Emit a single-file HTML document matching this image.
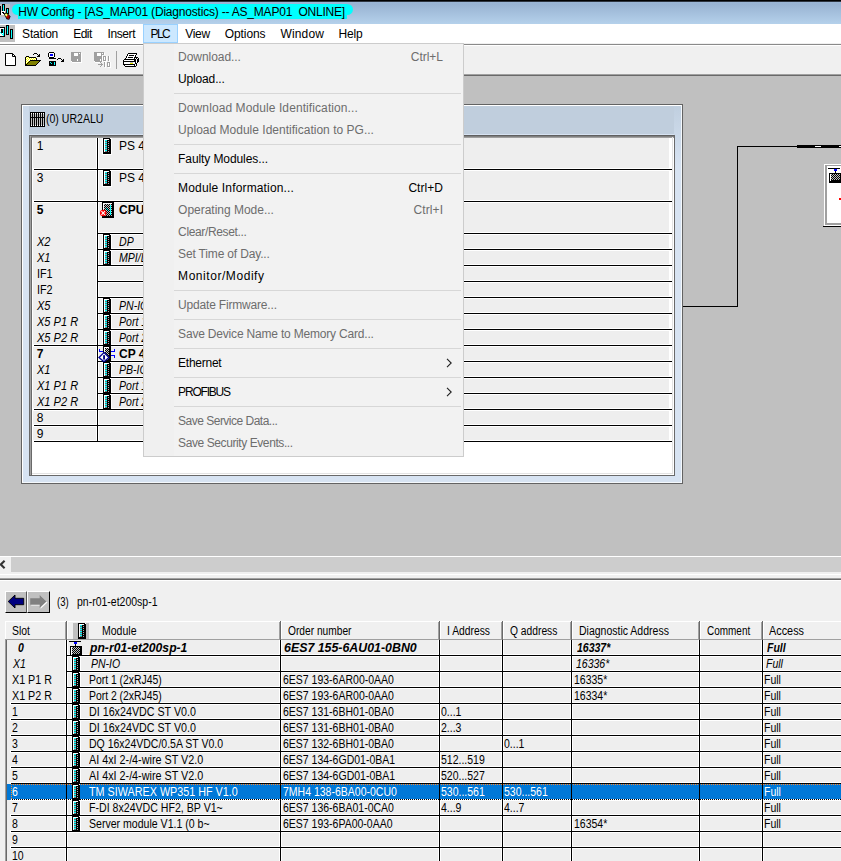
<!DOCTYPE html>
<html lang="en"><head><meta charset="utf-8"><title>HW Config</title>
<style>
html,body{margin:0;padding:0;background:#c0c0c0;overflow:hidden;}
#root{position:relative;width:841px;height:861px;overflow:hidden;background:#c0c0c0;font-family:"Liberation Sans", sans-serif;color:#000;}
#root div,#root span.t,#root svg{position:absolute;}
#root div{box-sizing:border-box;}
span.t{white-space:pre;}
svg{shape-rendering:crispEdges;overflow:visible;}
</style></head>
<body><div id="root">
<div style="left:0px;top:0px;width:841px;height:1px;background:#000;"></div>
<div style="left:0px;top:1px;width:841px;height:1px;background:#2e3540;"></div>
<div style="left:0px;top:2px;width:841px;height:22px;background:linear-gradient(#9bb6d6,#98b3d2 10%,#b5d1eb);"></div>
<div style="left:12px;top:4px;width:12px;height:11px;background:#00ffff;border-radius:50%;"></div>
<div style="left:341px;top:4px;width:12px;height:11px;background:#00ffff;border-radius:50%;"></div>
<div style="left:18px;top:4px;width:329px;height:15px;background:#00ffff;"></div>
<span class="t" style="left:18.2px;top:5px;font-size:12px;line-height:14px;letter-spacing:-0.202px;">HW Config - [AS_MAP01 (Diagnostics) -- AS_MAP01  ONLINE]</span>
<svg style="left:0px;top:4px" width="11" height="16" viewBox="0 0 11 16"><rect x="0" y="0" width="10" height="13" fill="#c0c0c0"/><rect x="0" y="2" width="1" height="9" fill="#000"/><rect x="2" y="0" width="3" height="9" fill="#000"/><rect x="3" y="1" width="1" height="7" fill="#00ffff"/><rect x="6" y="4" width="3" height="6" fill="#000"/><rect x="7" y="5" width="1" height="4" fill="#00ffff"/><rect x="1" y="7" width="4" height="4" fill="#fff"/><rect x="2" y="8" width="2" height="1" fill="#000"/><rect x="3" y="9" width="1" height="1" fill="#000"/><g shape-rendering="geometricPrecision"><path d="M3.6 9.6 L6.6 8.2 L10.6 12.4 L9.2 15.8 L6.6 15.2 Z" fill="#000"/><path d="M4.8 10 L6.4 9.4 L8 11 L6.2 13 Z" fill="#ffff00"/><path d="M8 11 L9.6 12.6 L8.8 14.8 L7 14.2 L6.2 13 Z" fill="#ff0000"/><path d="M5.2 10.6 L6.2 10.2 L7 11 L6 12 Z" fill="#fff"/><rect x="7.6" y="12.4" width="1" height="1.3" fill="#000"/></g></svg>
<div style="left:0px;top:24px;width:841px;height:20px;background:#fff;"></div>
<div style="left:0px;top:44px;width:841px;height:1px;background:#8a8a8a;"></div>
<div style="left:0px;top:45px;width:841px;height:1px;background:#fff;"></div>
<div style="left:464px;top:43px;width:377px;height:1px;background:#f0f0f0;"></div>
<div style="left:0px;top:25px;width:15px;height:17px;background:#c0c0c0;"></div>
<svg style="left:0px;top:25px" width="15" height="16" viewBox="0 0 15 16"><rect x="0" y="2" width="5" height="10" fill="#000"/><rect x="0" y="3" width="4" height="8" fill="#fff"/><rect x="1" y="4" width="2" height="4" fill="#000"/><rect x="3" y="4" width="1" height="7" fill="#00ffff"/><rect x="0" y="7" width="1" height="1" fill="#00ffff"/><rect x="1" y="8" width="1" height="1" fill="#00ffff"/><rect x="2" y="9" width="1" height="1" fill="#00ffff"/><rect x="6" y="0" width="3" height="10" fill="#000"/><rect x="7" y="1" width="1" height="8" fill="#00ffff"/><rect x="10" y="4" width="3" height="10" fill="#000"/><rect x="11" y="5" width="1" height="8" fill="#00ffff"/></svg>
<div style="left:143px;top:24px;width:35px;height:19px;background:#cce8ff;border:1px solid #99d1ff;"></div>
<span class="t" style="left:22.1px;top:27px;font-size:12px;line-height:14px;letter-spacing:-0.193px;">Station</span>
<span class="t" style="left:73.2px;top:27px;font-size:12px;line-height:14px;letter-spacing:-0.529px;">Edit</span>
<span class="t" style="left:107.5px;top:27px;font-size:12px;line-height:14px;letter-spacing:-0.403px;">Insert</span>
<span class="t" style="left:150.5px;top:27px;font-size:12px;line-height:14px;letter-spacing:-1.572px;">PLC</span>
<span class="t" style="left:185.2px;top:27px;font-size:12px;line-height:14px;letter-spacing:-0.266px;">View</span>
<span class="t" style="left:224.7px;top:27px;font-size:12px;line-height:14px;letter-spacing:-0.077px;">Options</span>
<span class="t" style="left:280.4px;top:27px;font-size:12px;line-height:14px;letter-spacing:0.163px;">Window</span>
<span class="t" style="left:338.6px;top:27px;font-size:12px;line-height:14px;letter-spacing:-0.229px;">Help</span>
<div style="left:0px;top:46px;width:841px;height:28px;background:#f0f0f0;"></div>
<div style="left:0px;top:74px;width:841px;height:1px;background:#a0a0a0;"></div>
<div style="left:0px;top:75px;width:841px;height:1px;background:#696969;"></div>
<svg style="left:5px;top:53px;shape-rendering:geometricPrecision" width="11" height="13" viewBox="0 0 11 13"><path d="M0.5 0.5 H7.5 L10.5 3.5 V12.5 H0.5 Z" fill="#fff" stroke="#000"/><path d="M7.5 0.5 V3.5 H10.5" fill="none" stroke="#000"/></svg><svg style="left:22px;top:50px" width="20" height="16" viewBox="0 0 20 16"><rect x="12" y="3" width="3" height="1" fill="#000"/><rect x="11" y="4" width="1" height="1" fill="#000"/><rect x="15" y="4" width="1" height="1" fill="#000"/><rect x="17" y="4" width="1" height="1" fill="#000"/><rect x="16" y="5" width="2" height="1" fill="#000"/><rect x="4" y="6" width="3" height="1" fill="#000"/><rect x="15" y="6" width="3" height="1" fill="#000"/><rect x="3" y="7" width="1" height="1" fill="#000"/><rect x="4" y="7" width="1" height="1" fill="#ffff00"/><rect x="5" y="7" width="1" height="1" fill="#fff"/><rect x="6" y="7" width="1" height="1" fill="#ffff00"/><rect x="7" y="7" width="7" height="1" fill="#000"/><rect x="3" y="8" width="1" height="1" fill="#000"/><rect x="4" y="8" width="1" height="1" fill="#fff"/><rect x="5" y="8" width="1" height="1" fill="#ffff00"/><rect x="6" y="8" width="1" height="1" fill="#fff"/><rect x="7" y="8" width="1" height="1" fill="#ffff00"/><rect x="8" y="8" width="1" height="1" fill="#fff"/><rect x="9" y="8" width="1" height="1" fill="#ffff00"/><rect x="10" y="8" width="1" height="1" fill="#fff"/><rect x="11" y="8" width="1" height="1" fill="#ffff00"/><rect x="12" y="8" width="1" height="1" fill="#fff"/><rect x="13" y="8" width="1" height="1" fill="#ffff00"/><rect x="14" y="8" width="1" height="1" fill="#000"/><rect x="3" y="9" width="1" height="1" fill="#000"/><rect x="4" y="9" width="1" height="1" fill="#ffff00"/><rect x="5" y="9" width="1" height="1" fill="#fff"/><rect x="6" y="9" width="1" height="1" fill="#ffff00"/><rect x="7" y="9" width="1" height="1" fill="#fff"/><rect x="8" y="9" width="1" height="1" fill="#ffff00"/><rect x="9" y="9" width="1" height="1" fill="#fff"/><rect x="10" y="9" width="1" height="1" fill="#ffff00"/><rect x="11" y="9" width="1" height="1" fill="#fff"/><rect x="12" y="9" width="1" height="1" fill="#ffff00"/><rect x="13" y="9" width="1" height="1" fill="#fff"/><rect x="14" y="9" width="1" height="1" fill="#000"/><rect x="3" y="10" width="1" height="1" fill="#000"/><rect x="4" y="10" width="1" height="1" fill="#fff"/><rect x="5" y="10" width="1" height="1" fill="#ffff00"/><rect x="6" y="10" width="1" height="1" fill="#fff"/><rect x="8" y="10" width="11" height="1" fill="#000"/><rect x="3" y="11" width="1" height="1" fill="#000"/><rect x="4" y="11" width="1" height="1" fill="#ffff00"/><rect x="5" y="11" width="1" height="1" fill="#fff"/><rect x="6" y="11" width="1" height="1" fill="#ffff00"/><rect x="7" y="11" width="1" height="1" fill="#000"/><rect x="8" y="11" width="9" height="1" fill="#808000"/><rect x="17" y="11" width="1" height="1" fill="#000"/><rect x="3" y="12" width="1" height="1" fill="#000"/><rect x="4" y="12" width="1" height="1" fill="#fff"/><rect x="5" y="12" width="1" height="1" fill="#ffff00"/><rect x="6" y="12" width="1" height="1" fill="#000"/><rect x="7" y="12" width="9" height="1" fill="#808000"/><rect x="16" y="12" width="1" height="1" fill="#000"/><rect x="3" y="13" width="1" height="1" fill="#000"/><rect x="4" y="13" width="1" height="1" fill="#ffff00"/><rect x="5" y="13" width="1" height="1" fill="#000"/><rect x="6" y="13" width="9" height="1" fill="#808000"/><rect x="15" y="13" width="1" height="1" fill="#000"/><rect x="3" y="14" width="2" height="1" fill="#000"/><rect x="5" y="14" width="9" height="1" fill="#808000"/><rect x="14" y="14" width="1" height="1" fill="#000"/><rect x="3" y="15" width="11" height="1" fill="#000"/></svg><svg style="left:45px;top:50px" width="20" height="16" viewBox="0 0 20 16"><rect x="4" y="2" width="5" height="1" fill="#000"/><rect x="3" y="3" width="1" height="1" fill="#000"/><rect x="4" y="3" width="5" height="1" fill="#fff"/><rect x="9" y="3" width="1" height="1" fill="#000"/><rect x="3" y="4" width="1" height="1" fill="#000"/><rect x="4" y="4" width="1" height="1" fill="#fff"/><rect x="5" y="4" width="3" height="1" fill="#0000ff"/><rect x="8" y="4" width="1" height="1" fill="#fff"/><rect x="9" y="4" width="1" height="1" fill="#000"/><rect x="3" y="5" width="1" height="1" fill="#000"/><rect x="4" y="5" width="1" height="1" fill="#fff"/><rect x="5" y="5" width="3" height="1" fill="#0000ff"/><rect x="8" y="5" width="1" height="1" fill="#fff"/><rect x="9" y="5" width="1" height="1" fill="#000"/><rect x="3" y="6" width="1" height="1" fill="#000"/><rect x="4" y="6" width="5" height="1" fill="#fff"/><rect x="9" y="6" width="1" height="1" fill="#000"/><rect x="4" y="7" width="5" height="1" fill="#000"/><rect x="4" y="8" width="7" height="1" fill="#000"/><rect x="13" y="8" width="3" height="1" fill="#000"/><rect x="12" y="9" width="1" height="1" fill="#000"/><rect x="16" y="9" width="1" height="1" fill="#000"/><rect x="18" y="9" width="1" height="1" fill="#000"/><rect x="17" y="10" width="2" height="1" fill="#000"/><rect x="4" y="11" width="7" height="1" fill="#000"/><rect x="16" y="11" width="3" height="1" fill="#000"/><rect x="4" y="12" width="1" height="1" fill="#000"/><rect x="5" y="12" width="1" height="1" fill="#00ffff"/><rect x="6" y="12" width="3" height="1" fill="#000"/><rect x="9" y="12" width="1" height="1" fill="#00ffff"/><rect x="10" y="12" width="1" height="1" fill="#000"/><rect x="4" y="13" width="2" height="1" fill="#000"/><rect x="6" y="13" width="1" height="1" fill="#00ffff"/><rect x="7" y="13" width="2" height="1" fill="#000"/><rect x="9" y="13" width="1" height="1" fill="#00ffff"/><rect x="10" y="13" width="1" height="1" fill="#000"/><rect x="4" y="14" width="5" height="1" fill="#000"/><rect x="9" y="14" width="1" height="1" fill="#00ffff"/><rect x="10" y="14" width="1" height="1" fill="#000"/><rect x="4" y="15" width="7" height="1" fill="#000"/></svg><svg style="left:68px;top:50px" width="14" height="13" viewBox="0 0 14 13"><rect x="3" y="2" width="10" height="1" fill="#a0a0a0"/><rect x="3" y="3" width="3" height="1" fill="#a0a0a0"/><rect x="6" y="3" width="4" height="1" fill="#fff"/><rect x="10" y="3" width="1" height="1" fill="#a0a0a0"/><rect x="11" y="3" width="1" height="1" fill="#fff"/><rect x="12" y="3" width="1" height="1" fill="#a0a0a0"/><rect x="13" y="3" width="1" height="1" fill="#fff"/><rect x="3" y="4" width="3" height="1" fill="#a0a0a0"/><rect x="6" y="4" width="4" height="1" fill="#fff"/><rect x="10" y="4" width="3" height="1" fill="#a0a0a0"/><rect x="13" y="4" width="1" height="1" fill="#fff"/><rect x="3" y="5" width="3" height="1" fill="#a0a0a0"/><rect x="6" y="5" width="4" height="1" fill="#fff"/><rect x="10" y="5" width="3" height="1" fill="#a0a0a0"/><rect x="13" y="5" width="1" height="1" fill="#fff"/><rect x="3" y="6" width="10" height="1" fill="#a0a0a0"/><rect x="13" y="6" width="1" height="1" fill="#fff"/><rect x="3" y="7" width="10" height="1" fill="#a0a0a0"/><rect x="13" y="7" width="1" height="1" fill="#fff"/><rect x="3" y="8" width="10" height="1" fill="#a0a0a0"/><rect x="13" y="8" width="1" height="1" fill="#fff"/><rect x="3" y="9" width="6" height="1" fill="#a0a0a0"/><rect x="9" y="9" width="1" height="1" fill="#fff"/><rect x="10" y="9" width="3" height="1" fill="#a0a0a0"/><rect x="13" y="9" width="1" height="1" fill="#fff"/><rect x="3" y="10" width="6" height="1" fill="#a0a0a0"/><rect x="9" y="10" width="1" height="1" fill="#fff"/><rect x="10" y="10" width="3" height="1" fill="#a0a0a0"/><rect x="13" y="10" width="1" height="1" fill="#fff"/><rect x="3" y="11" width="1" height="1" fill="#fff"/><rect x="4" y="11" width="9" height="1" fill="#a0a0a0"/><rect x="13" y="11" width="1" height="1" fill="#fff"/><rect x="4" y="12" width="10" height="1" fill="#fff"/></svg><svg style="left:91px;top:50px" width="20" height="18" viewBox="0 0 20 18"><rect x="3" y="2" width="10" height="1" fill="#a0a0a0"/><rect x="3" y="3" width="3" height="1" fill="#a0a0a0"/><rect x="6" y="3" width="4" height="1" fill="#fff"/><rect x="10" y="3" width="1" height="1" fill="#a0a0a0"/><rect x="11" y="3" width="1" height="1" fill="#fff"/><rect x="12" y="3" width="1" height="1" fill="#a0a0a0"/><rect x="13" y="3" width="1" height="1" fill="#fff"/><rect x="3" y="4" width="3" height="1" fill="#a0a0a0"/><rect x="6" y="4" width="4" height="1" fill="#fff"/><rect x="10" y="4" width="3" height="1" fill="#a0a0a0"/><rect x="13" y="4" width="1" height="1" fill="#fff"/><rect x="3" y="5" width="3" height="1" fill="#a0a0a0"/><rect x="6" y="5" width="4" height="1" fill="#fff"/><rect x="10" y="5" width="1" height="1" fill="#a0a0a0"/><rect x="11" y="5" width="1" height="1" fill="#fff"/><rect x="3" y="6" width="8" height="1" fill="#a0a0a0"/><rect x="11" y="6" width="1" height="1" fill="#fff"/><rect x="12" y="6" width="3" height="1" fill="#a0a0a0"/><rect x="15" y="6" width="1" height="1" fill="#fff"/><rect x="17" y="6" width="1" height="1" fill="#a0a0a0"/><rect x="18" y="6" width="1" height="1" fill="#fff"/><rect x="3" y="7" width="8" height="1" fill="#a0a0a0"/><rect x="11" y="7" width="1" height="1" fill="#fff"/><rect x="12" y="7" width="1" height="1" fill="#a0a0a0"/><rect x="13" y="7" width="1" height="1" fill="#fff"/><rect x="14" y="7" width="1" height="1" fill="#a0a0a0"/><rect x="15" y="7" width="1" height="1" fill="#fff"/><rect x="17" y="7" width="1" height="1" fill="#a0a0a0"/><rect x="18" y="7" width="1" height="1" fill="#fff"/><rect x="3" y="8" width="8" height="1" fill="#a0a0a0"/><rect x="11" y="8" width="1" height="1" fill="#fff"/><rect x="12" y="8" width="1" height="1" fill="#a0a0a0"/><rect x="13" y="8" width="1" height="1" fill="#fff"/><rect x="14" y="8" width="1" height="1" fill="#a0a0a0"/><rect x="15" y="8" width="1" height="1" fill="#fff"/><rect x="17" y="8" width="1" height="1" fill="#a0a0a0"/><rect x="18" y="8" width="1" height="1" fill="#fff"/><rect x="3" y="9" width="6" height="1" fill="#a0a0a0"/><rect x="9" y="9" width="1" height="1" fill="#fff"/><rect x="10" y="9" width="1" height="1" fill="#a0a0a0"/><rect x="11" y="9" width="1" height="1" fill="#fff"/><rect x="12" y="9" width="1" height="1" fill="#a0a0a0"/><rect x="13" y="9" width="1" height="1" fill="#fff"/><rect x="14" y="9" width="1" height="1" fill="#a0a0a0"/><rect x="15" y="9" width="1" height="1" fill="#fff"/><rect x="17" y="9" width="1" height="1" fill="#a0a0a0"/><rect x="18" y="9" width="1" height="1" fill="#fff"/><rect x="3" y="10" width="6" height="1" fill="#a0a0a0"/><rect x="9" y="10" width="1" height="1" fill="#fff"/><rect x="10" y="10" width="1" height="1" fill="#a0a0a0"/><rect x="11" y="10" width="1" height="1" fill="#fff"/><rect x="12" y="10" width="3" height="1" fill="#a0a0a0"/><rect x="15" y="10" width="1" height="1" fill="#fff"/><rect x="17" y="10" width="1" height="1" fill="#a0a0a0"/><rect x="18" y="10" width="1" height="1" fill="#fff"/><rect x="3" y="11" width="1" height="1" fill="#fff"/><rect x="4" y="11" width="7" height="1" fill="#a0a0a0"/><rect x="11" y="11" width="1" height="1" fill="#fff"/><rect x="13" y="11" width="3" height="1" fill="#fff"/><rect x="18" y="11" width="1" height="1" fill="#fff"/><rect x="4" y="12" width="5" height="1" fill="#fff"/><rect x="9" y="12" width="1" height="1" fill="#a0a0a0"/><rect x="13" y="12" width="1" height="1" fill="#a0a0a0"/><rect x="14" y="12" width="1" height="1" fill="#fff"/><rect x="16" y="12" width="3" height="1" fill="#a0a0a0"/><rect x="19" y="12" width="1" height="1" fill="#fff"/><rect x="10" y="13" width="1" height="1" fill="#a0a0a0"/><rect x="13" y="13" width="1" height="1" fill="#a0a0a0"/><rect x="14" y="13" width="1" height="1" fill="#fff"/><rect x="16" y="13" width="1" height="1" fill="#a0a0a0"/><rect x="17" y="13" width="1" height="1" fill="#fff"/><rect x="18" y="13" width="1" height="1" fill="#a0a0a0"/><rect x="19" y="13" width="1" height="1" fill="#fff"/><rect x="7" y="14" width="5" height="1" fill="#a0a0a0"/><rect x="13" y="14" width="1" height="1" fill="#a0a0a0"/><rect x="14" y="14" width="1" height="1" fill="#fff"/><rect x="16" y="14" width="1" height="1" fill="#a0a0a0"/><rect x="17" y="14" width="1" height="1" fill="#fff"/><rect x="18" y="14" width="1" height="1" fill="#a0a0a0"/><rect x="19" y="14" width="1" height="1" fill="#fff"/><rect x="10" y="15" width="1" height="1" fill="#a0a0a0"/><rect x="13" y="15" width="1" height="1" fill="#a0a0a0"/><rect x="14" y="15" width="1" height="1" fill="#fff"/><rect x="16" y="15" width="1" height="1" fill="#a0a0a0"/><rect x="17" y="15" width="1" height="1" fill="#fff"/><rect x="18" y="15" width="1" height="1" fill="#a0a0a0"/><rect x="19" y="15" width="1" height="1" fill="#fff"/><rect x="9" y="16" width="1" height="1" fill="#a0a0a0"/><rect x="13" y="16" width="1" height="1" fill="#a0a0a0"/><rect x="14" y="16" width="1" height="1" fill="#fff"/><rect x="16" y="16" width="3" height="1" fill="#a0a0a0"/><rect x="19" y="16" width="1" height="1" fill="#fff"/><rect x="14" y="17" width="1" height="1" fill="#fff"/><rect x="17" y="17" width="3" height="1" fill="#fff"/></svg><svg style="left:116px;top:51px" width="1" height="18" viewBox="0 0 1 18"><rect x="0" y="0" width="1" height="18" fill="#a0a0a0"/></svg><svg style="left:123px;top:53px" width="16" height="14" viewBox="0 0 16 14"><rect x="5" y="0" width="9" height="1" fill="#000"/><rect x="4" y="1" width="1" height="1" fill="#000"/><rect x="5" y="1" width="8" height="1" fill="#fff"/><rect x="13" y="1" width="1" height="1" fill="#000"/><rect x="4" y="2" width="1" height="1" fill="#000"/><rect x="5" y="2" width="1" height="1" fill="#fff"/><rect x="6" y="2" width="5" height="1" fill="#000"/><rect x="11" y="2" width="1" height="1" fill="#fff"/><rect x="12" y="2" width="1" height="1" fill="#000"/><rect x="3" y="3" width="1" height="1" fill="#000"/><rect x="4" y="3" width="8" height="1" fill="#fff"/><rect x="12" y="3" width="1" height="1" fill="#000"/><rect x="3" y="4" width="1" height="1" fill="#000"/><rect x="4" y="4" width="1" height="1" fill="#fff"/><rect x="5" y="4" width="5" height="1" fill="#000"/><rect x="10" y="4" width="1" height="1" fill="#fff"/><rect x="11" y="4" width="4" height="1" fill="#000"/><rect x="2" y="5" width="1" height="1" fill="#000"/><rect x="3" y="5" width="8" height="1" fill="#fff"/><rect x="11" y="5" width="1" height="1" fill="#000"/><rect x="12" y="5" width="1" height="1" fill="#fff"/><rect x="13" y="5" width="1" height="1" fill="#000"/><rect x="14" y="5" width="1" height="1" fill="#fff"/><rect x="15" y="5" width="1" height="1" fill="#000"/><rect x="1" y="6" width="12" height="1" fill="#000"/><rect x="13" y="6" width="1" height="1" fill="#fff"/><rect x="14" y="6" width="2" height="1" fill="#000"/><rect x="0" y="7" width="1" height="1" fill="#000"/><rect x="1" y="7" width="10" height="1" fill="#fff"/><rect x="11" y="7" width="2" height="1" fill="#000"/><rect x="13" y="7" width="1" height="1" fill="#fff"/><rect x="14" y="7" width="2" height="1" fill="#000"/><rect x="0" y="8" width="13" height="1" fill="#000"/><rect x="13" y="8" width="1" height="1" fill="#fff"/><rect x="14" y="8" width="2" height="1" fill="#000"/><rect x="0" y="9" width="1" height="1" fill="#000"/><rect x="1" y="9" width="6" height="1" fill="#fff"/><rect x="7" y="9" width="3" height="1" fill="#c0c0c0"/><rect x="10" y="9" width="2" height="1" fill="#fff"/><rect x="12" y="9" width="1" height="1" fill="#000"/><rect x="13" y="9" width="1" height="1" fill="#fff"/><rect x="14" y="9" width="1" height="1" fill="#000"/><rect x="0" y="10" width="1" height="1" fill="#000"/><rect x="1" y="10" width="6" height="1" fill="#fff"/><rect x="7" y="10" width="3" height="1" fill="#e8e800"/><rect x="10" y="10" width="2" height="1" fill="#fff"/><rect x="12" y="10" width="2" height="1" fill="#000"/><rect x="14" y="10" width="1" height="1" fill="#fff"/><rect x="0" y="11" width="12" height="1" fill="#000"/><rect x="12" y="11" width="1" height="1" fill="#fff"/><rect x="13" y="11" width="1" height="1" fill="#000"/><rect x="1" y="12" width="1" height="1" fill="#000"/><rect x="2" y="12" width="9" height="1" fill="#fff"/><rect x="11" y="12" width="1" height="1" fill="#000"/><rect x="12" y="12" width="1" height="1" fill="#fff"/><rect x="13" y="12" width="1" height="1" fill="#000"/><rect x="2" y="13" width="11" height="1" fill="#000"/></svg>
<div style="left:0px;top:76px;width:841px;height:480px;background:#c0c0c0;"></div>
<div style="left:683px;top:306px;width:55px;height:1px;background:#000;"></div>
<div style="left:737px;top:146px;width:1px;height:161px;background:#000;"></div>
<div style="left:737px;top:146px;width:104px;height:1px;background:#000;"></div>
<div style="left:797px;top:145px;width:44px;height:3px;background:#000;"></div>
<div style="left:815px;top:146px;width:6px;height:1px;background:#fff;"></div>
<div style="left:839px;top:146px;width:2px;height:1px;background:#fff;"></div>
<div style="left:824px;top:164px;width:20px;height:63px;background:#fff;"></div>
<div style="left:825px;top:165px;width:20px;height:60px;background:#a0a0a0;"></div>
<div style="left:827px;top:166px;width:20px;height:57px;background:#fff;"></div>
<div style="left:823px;top:226px;width:20px;height:1px;background:#000;"></div>
<svg style="left:828px;top:167px" width="13" height="17" viewBox="0 0 13 17"><rect x="0" y="1" width="12" height="1" fill="#000"/><rect x="6" y="2" width="3" height="2" fill="#0000ff"/><rect x="7" y="4" width="1" height="2" fill="#000"/><rect x="1" y="6" width="12" height="10" fill="#000"/><rect x="3" y="7" width="1" height="1" fill="#c0c0c0"/><rect x="5" y="7" width="1" height="1" fill="#c0c0c0"/><rect x="7" y="7" width="1" height="1" fill="#c0c0c0"/><rect x="9" y="7" width="1" height="1" fill="#c0c0c0"/><rect x="11" y="7" width="1" height="1" fill="#c0c0c0"/><rect x="4" y="8" width="1" height="1" fill="#c0c0c0"/><rect x="6" y="8" width="1" height="1" fill="#c0c0c0"/><rect x="8" y="8" width="1" height="1" fill="#c0c0c0"/><rect x="10" y="8" width="1" height="1" fill="#c0c0c0"/><rect x="3" y="9" width="1" height="1" fill="#c0c0c0"/><rect x="5" y="9" width="1" height="1" fill="#c0c0c0"/><rect x="7" y="9" width="1" height="1" fill="#c0c0c0"/><rect x="9" y="9" width="1" height="1" fill="#c0c0c0"/><rect x="11" y="9" width="1" height="1" fill="#c0c0c0"/><rect x="4" y="10" width="1" height="1" fill="#c0c0c0"/><rect x="6" y="10" width="1" height="1" fill="#c0c0c0"/><rect x="8" y="10" width="1" height="1" fill="#c0c0c0"/><rect x="10" y="10" width="1" height="1" fill="#c0c0c0"/><rect x="3" y="11" width="1" height="1" fill="#c0c0c0"/><rect x="5" y="11" width="1" height="1" fill="#c0c0c0"/><rect x="7" y="11" width="1" height="1" fill="#c0c0c0"/><rect x="9" y="11" width="1" height="1" fill="#c0c0c0"/><rect x="11" y="11" width="1" height="1" fill="#c0c0c0"/><rect x="4" y="12" width="1" height="1" fill="#c0c0c0"/><rect x="6" y="12" width="1" height="1" fill="#c0c0c0"/><rect x="8" y="12" width="1" height="1" fill="#c0c0c0"/><rect x="10" y="12" width="1" height="1" fill="#c0c0c0"/><rect x="2" y="7" width="1" height="7" fill="#fff"/></svg>
<div style="left:839px;top:198px;width:2px;height:2px;background:#ff0000;"></div>
<div style="left:21px;top:104px;width:662px;height:380px;background:#d7e3f2;border:1px solid #636363;"></div>
<div style="left:22px;top:105px;width:660px;height:378px;background:transparent;border:1px solid #fff;border-right-color:#f4f8fc;border-bottom-color:#f4f8fc;"></div>
<div style="left:29px;top:106px;width:645px;height:28px;background:#c0cedd;"></div>
<div style="left:674px;top:106px;width:7px;height:60px;background:linear-gradient(#c0cfdf,#d7e3f2);"></div>
<div style="left:23px;top:106px;width:6px;height:60px;background:linear-gradient(#cbd9e9,#d7e3f2);"></div>
<svg style="left:30px;top:112px" width="15" height="15" viewBox="0 0 15 15"><rect x="0" y="0" width="15" height="15" fill="#000"/><rect x="1" y="1" width="1" height="1" fill="#fff"/><rect x="1" y="2" width="1" height="3" fill="#c0c0c0"/><rect x="1" y="6" width="1" height="7" fill="#c0c0c0"/><rect x="1" y="13" width="1" height="1" fill="#fff"/><rect x="3" y="1" width="1" height="1" fill="#fff"/><rect x="3" y="2" width="1" height="3" fill="#c0c0c0"/><rect x="3" y="6" width="1" height="7" fill="#c0c0c0"/><rect x="3" y="13" width="1" height="1" fill="#fff"/><rect x="5" y="1" width="1" height="1" fill="#fff"/><rect x="5" y="2" width="1" height="3" fill="#c0c0c0"/><rect x="5" y="6" width="1" height="7" fill="#c0c0c0"/><rect x="5" y="13" width="1" height="1" fill="#fff"/><rect x="7" y="1" width="1" height="1" fill="#fff"/><rect x="7" y="2" width="1" height="3" fill="#c0c0c0"/><rect x="7" y="6" width="1" height="7" fill="#c0c0c0"/><rect x="7" y="13" width="1" height="1" fill="#fff"/><rect x="9" y="1" width="1" height="1" fill="#fff"/><rect x="9" y="2" width="1" height="3" fill="#c0c0c0"/><rect x="9" y="6" width="1" height="7" fill="#c0c0c0"/><rect x="9" y="13" width="1" height="1" fill="#fff"/><rect x="11" y="1" width="1" height="1" fill="#fff"/><rect x="11" y="2" width="1" height="3" fill="#c0c0c0"/><rect x="11" y="6" width="1" height="7" fill="#c0c0c0"/><rect x="11" y="13" width="1" height="1" fill="#fff"/><rect x="13" y="1" width="1" height="1" fill="#fff"/><rect x="13" y="2" width="1" height="3" fill="#c0c0c0"/><rect x="13" y="6" width="1" height="7" fill="#c0c0c0"/><rect x="13" y="13" width="1" height="1" fill="#fff"/></svg>
<span class="t" style="left:46px;top:112px;font-size:12px;line-height:14px;transform:scaleX(0.8782);transform-origin:0 0;">(0) UR2ALU</span>
<div style="left:29px;top:135px;width:646px;height:341px;background:#fff;"></div>
<div style="left:29px;top:135px;width:645px;height:1px;background:#606060;"></div>
<div style="left:29px;top:135px;width:1px;height:340px;background:#696969;"></div>
<div style="left:30px;top:136px;width:644px;height:1px;background:#808080;"></div>
<div style="left:30px;top:137px;width:644px;height:1px;background:#a0a0a0;"></div>
<div style="left:30px;top:136px;width:1px;height:339px;background:#a0a0a0;"></div>
<div style="left:31px;top:137px;width:1px;height:338px;background:#696969;"></div>
<div style="left:29px;top:475px;width:646px;height:1px;background:#696969;"></div>
<div style="left:674px;top:135px;width:1px;height:341px;background:#696969;"></div>
<div style="left:672px;top:137px;width:1px;height:337px;background:#e3e3e3;"></div>
<div style="left:32px;top:473px;width:641px;height:1px;background:#e3e3e3;"></div>
<div style="left:33px;top:138px;width:636px;height:304px;background:#eeeeee;"></div>
<div style="left:33px;top:168px;width:639px;height:3px;background:#fff;"></div>
<div style="left:33px;top:200px;width:639px;height:3px;background:#fff;"></div>
<div style="left:33px;top:344px;width:639px;height:3px;background:#fff;"></div>
<div style="left:33px;top:408px;width:639px;height:3px;background:#fff;"></div>
<div style="left:33px;top:424px;width:639px;height:3px;background:#fff;"></div>
<div style="left:33px;top:440px;width:639px;height:3px;background:#fff;"></div>
<div style="left:96px;top:232px;width:576px;height:3px;background:#fff;"></div>
<div style="left:96px;top:248px;width:576px;height:3px;background:#fff;"></div>
<div style="left:96px;top:264px;width:576px;height:3px;background:#fff;"></div>
<div style="left:96px;top:280px;width:576px;height:3px;background:#fff;"></div>
<div style="left:96px;top:296px;width:576px;height:3px;background:#fff;"></div>
<div style="left:96px;top:312px;width:576px;height:3px;background:#fff;"></div>
<div style="left:96px;top:328px;width:576px;height:3px;background:#fff;"></div>
<div style="left:96px;top:360px;width:576px;height:3px;background:#fff;"></div>
<div style="left:96px;top:376px;width:576px;height:3px;background:#fff;"></div>
<div style="left:96px;top:392px;width:576px;height:3px;background:#fff;"></div>
<div style="left:96px;top:138px;width:3px;height:304px;background:#fff;"></div>
<div style="left:102px;top:138px;width:10px;height:17px;background:#fff;"></div>
<div style="left:102px;top:170px;width:10px;height:17px;background:#fff;"></div>
<div style="left:102px;top:234px;width:10px;height:15px;background:#fff;"></div>
<div style="left:102px;top:250px;width:10px;height:15px;background:#fff;"></div>
<div style="left:102px;top:298px;width:10px;height:15px;background:#fff;"></div>
<div style="left:102px;top:314px;width:10px;height:15px;background:#fff;"></div>
<div style="left:102px;top:330px;width:10px;height:15px;background:#fff;"></div>
<div style="left:102px;top:362px;width:10px;height:15px;background:#fff;"></div>
<div style="left:102px;top:378px;width:10px;height:15px;background:#fff;"></div>
<div style="left:102px;top:394px;width:10px;height:15px;background:#fff;"></div>
<div style="left:34px;top:169px;width:638px;height:1px;background:#000;"></div>
<div style="left:34px;top:201px;width:638px;height:1px;background:#000;"></div>
<div style="left:34px;top:345px;width:638px;height:1px;background:#000;"></div>
<div style="left:34px;top:409px;width:638px;height:1px;background:#000;"></div>
<div style="left:34px;top:425px;width:638px;height:1px;background:#000;"></div>
<div style="left:34px;top:441px;width:638px;height:1px;background:#000;"></div>
<div style="left:97px;top:233px;width:575px;height:1px;background:#000;"></div>
<div style="left:97px;top:249px;width:575px;height:1px;background:#000;"></div>
<div style="left:97px;top:265px;width:575px;height:1px;background:#000;"></div>
<div style="left:97px;top:281px;width:575px;height:1px;background:#000;"></div>
<div style="left:97px;top:297px;width:575px;height:1px;background:#000;"></div>
<div style="left:97px;top:313px;width:575px;height:1px;background:#000;"></div>
<div style="left:97px;top:329px;width:575px;height:1px;background:#000;"></div>
<div style="left:97px;top:361px;width:575px;height:1px;background:#000;"></div>
<div style="left:97px;top:377px;width:575px;height:1px;background:#000;"></div>
<div style="left:97px;top:393px;width:575px;height:1px;background:#000;"></div>
<div style="left:97px;top:138px;width:1px;height:304px;background:#000;"></div>
<span class="t" style="left:36.7px;top:139px;font-size:12px;line-height:14px;">1</span>
<span class="t" style="left:36.7px;top:171px;font-size:12px;line-height:14px;">3</span>
<span class="t" style="left:36.7px;top:203px;font-size:12px;line-height:14px;font-weight:bold;">5</span>
<span class="t" style="left:36.7px;top:235px;font-size:12px;line-height:14px;font-style:italic;transform:scaleX(0.92);transform-origin:0 0;">X2</span>
<span class="t" style="left:36.7px;top:251px;font-size:12px;line-height:14px;font-style:italic;transform:scaleX(0.92);transform-origin:0 0;">X1</span>
<span class="t" style="left:36.7px;top:267px;font-size:12px;line-height:14px;transform:scaleX(0.9);transform-origin:0 0;">IF1</span>
<span class="t" style="left:36.7px;top:283px;font-size:12px;line-height:14px;transform:scaleX(0.9);transform-origin:0 0;">IF2</span>
<span class="t" style="left:36.7px;top:299px;font-size:12px;line-height:14px;font-style:italic;transform:scaleX(0.92);transform-origin:0 0;">X5</span>
<span class="t" style="left:36.7px;top:315px;font-size:12px;line-height:14px;font-style:italic;transform:scaleX(0.92);transform-origin:0 0;">X5 P1 R</span>
<span class="t" style="left:36.7px;top:331px;font-size:12px;line-height:14px;font-style:italic;transform:scaleX(0.92);transform-origin:0 0;">X5 P2 R</span>
<span class="t" style="left:36.7px;top:347px;font-size:12px;line-height:14px;font-weight:bold;">7</span>
<span class="t" style="left:36.7px;top:363px;font-size:12px;line-height:14px;font-style:italic;transform:scaleX(0.92);transform-origin:0 0;">X1</span>
<span class="t" style="left:36.7px;top:379px;font-size:12px;line-height:14px;font-style:italic;transform:scaleX(0.92);transform-origin:0 0;">X1 P1 R</span>
<span class="t" style="left:36.7px;top:395px;font-size:12px;line-height:14px;font-style:italic;transform:scaleX(0.92);transform-origin:0 0;">X1 P2 R</span>
<span class="t" style="left:36.7px;top:411px;font-size:12px;line-height:14px;">8</span>
<span class="t" style="left:36.7px;top:427px;font-size:12px;line-height:14px;">9</span>
<svg style="left:102px;top:138px" width="10" height="17" viewBox="-1 0 10 17"><rect x="0" y="0" width="8" height="16" fill="#000"/><rect x="1" y="1" width="1" height="13" fill="#fff"/><rect x="1" y="1" width="5" height="1" fill="#fff"/><rect x="7" y="0" width="1" height="1" fill="#fff"/><rect x="2" y="2" width="2" height="1" fill="#00ffff"/><rect x="2" y="3" width="2" height="1" fill="#707070"/><rect x="5" y="3" width="1" height="1" fill="#b0b0b0"/><rect x="2" y="4" width="2" height="1" fill="#00ffff"/><rect x="2" y="5" width="2" height="1" fill="#707070"/><rect x="5" y="5" width="1" height="1" fill="#b0b0b0"/><rect x="2" y="6" width="2" height="1" fill="#00ffff"/><rect x="2" y="7" width="2" height="1" fill="#707070"/><rect x="5" y="7" width="1" height="1" fill="#b0b0b0"/><rect x="2" y="8" width="2" height="1" fill="#00ffff"/><rect x="2" y="9" width="2" height="1" fill="#707070"/><rect x="5" y="9" width="1" height="1" fill="#b0b0b0"/><rect x="2" y="10" width="2" height="1" fill="#00ffff"/><rect x="2" y="11" width="2" height="1" fill="#707070"/><rect x="5" y="11" width="1" height="1" fill="#b0b0b0"/><rect x="2" y="12" width="2" height="1" fill="#00ffff"/><rect x="2" y="13" width="2" height="1" fill="#707070"/><rect x="5" y="13" width="1" height="1" fill="#b0b0b0"/></svg>
<span class="t" style="left:119px;top:139px;font-size:12px;line-height:14px;">PS 407 10A</span>
<svg style="left:102px;top:170px" width="10" height="17" viewBox="-1 0 10 17"><rect x="0" y="0" width="8" height="16" fill="#000"/><rect x="1" y="1" width="1" height="13" fill="#fff"/><rect x="1" y="1" width="5" height="1" fill="#fff"/><rect x="7" y="0" width="1" height="1" fill="#fff"/><rect x="2" y="2" width="2" height="1" fill="#00ffff"/><rect x="2" y="3" width="2" height="1" fill="#707070"/><rect x="5" y="3" width="1" height="1" fill="#b0b0b0"/><rect x="2" y="4" width="2" height="1" fill="#00ffff"/><rect x="2" y="5" width="2" height="1" fill="#707070"/><rect x="5" y="5" width="1" height="1" fill="#b0b0b0"/><rect x="2" y="6" width="2" height="1" fill="#00ffff"/><rect x="2" y="7" width="2" height="1" fill="#707070"/><rect x="5" y="7" width="1" height="1" fill="#b0b0b0"/><rect x="2" y="8" width="2" height="1" fill="#00ffff"/><rect x="2" y="9" width="2" height="1" fill="#707070"/><rect x="5" y="9" width="1" height="1" fill="#b0b0b0"/><rect x="2" y="10" width="2" height="1" fill="#00ffff"/><rect x="2" y="11" width="2" height="1" fill="#707070"/><rect x="5" y="11" width="1" height="1" fill="#b0b0b0"/><rect x="2" y="12" width="2" height="1" fill="#00ffff"/><rect x="2" y="13" width="2" height="1" fill="#707070"/><rect x="5" y="13" width="1" height="1" fill="#b0b0b0"/></svg>
<span class="t" style="left:119px;top:171px;font-size:12px;line-height:14px;">PS 407 10A</span>
<svg style="left:100px;top:202px" width="14" height="16" viewBox="0 0 14 16"><rect x="2" y="0" width="12" height="16" fill="#000"/><rect x="3" y="1" width="1" height="13" fill="#fff"/><rect x="3" y="1" width="9" height="1" fill="#fff"/><rect x="4" y="2" width="1" height="1" fill="#c0c0c0"/><rect x="6" y="2" width="1" height="1" fill="#c0c0c0"/><rect x="8" y="2" width="1" height="1" fill="#c0c0c0"/><rect x="10" y="2" width="1" height="1" fill="#c0c0c0"/><rect x="5" y="3" width="1" height="1" fill="#c0c0c0"/><rect x="7" y="3" width="1" height="1" fill="#c0c0c0"/><rect x="9" y="3" width="1" height="1" fill="#c0c0c0"/><rect x="11" y="3" width="1" height="1" fill="#c0c0c0"/><rect x="4" y="4" width="1" height="1" fill="#c0c0c0"/><rect x="6" y="4" width="1" height="1" fill="#c0c0c0"/><rect x="8" y="4" width="1" height="1" fill="#c0c0c0"/><rect x="10" y="4" width="1" height="1" fill="#c0c0c0"/><rect x="5" y="5" width="1" height="1" fill="#c0c0c0"/><rect x="7" y="5" width="1" height="1" fill="#c0c0c0"/><rect x="9" y="5" width="1" height="1" fill="#c0c0c0"/><rect x="11" y="5" width="1" height="1" fill="#c0c0c0"/><rect x="4" y="6" width="1" height="1" fill="#c0c0c0"/><rect x="6" y="6" width="1" height="1" fill="#c0c0c0"/><rect x="8" y="6" width="1" height="1" fill="#c0c0c0"/><rect x="10" y="6" width="1" height="1" fill="#c0c0c0"/><rect x="5" y="7" width="1" height="1" fill="#c0c0c0"/><rect x="7" y="7" width="1" height="1" fill="#c0c0c0"/><rect x="9" y="7" width="1" height="1" fill="#c0c0c0"/><rect x="11" y="7" width="1" height="1" fill="#c0c0c0"/><rect x="4" y="8" width="1" height="1" fill="#c0c0c0"/><rect x="6" y="8" width="1" height="1" fill="#c0c0c0"/><rect x="8" y="8" width="1" height="1" fill="#c0c0c0"/><rect x="10" y="8" width="1" height="1" fill="#c0c0c0"/><rect x="5" y="9" width="1" height="1" fill="#c0c0c0"/><rect x="7" y="9" width="1" height="1" fill="#c0c0c0"/><rect x="9" y="9" width="1" height="1" fill="#c0c0c0"/><rect x="11" y="9" width="1" height="1" fill="#c0c0c0"/><rect x="4" y="10" width="1" height="1" fill="#c0c0c0"/><rect x="6" y="10" width="1" height="1" fill="#c0c0c0"/><rect x="8" y="10" width="1" height="1" fill="#c0c0c0"/><rect x="10" y="10" width="1" height="1" fill="#c0c0c0"/><rect x="5" y="11" width="1" height="1" fill="#c0c0c0"/><rect x="7" y="11" width="1" height="1" fill="#c0c0c0"/><rect x="9" y="11" width="1" height="1" fill="#c0c0c0"/><rect x="11" y="11" width="1" height="1" fill="#c0c0c0"/><rect x="4" y="12" width="1" height="1" fill="#c0c0c0"/><rect x="6" y="12" width="1" height="1" fill="#c0c0c0"/><rect x="8" y="12" width="1" height="1" fill="#c0c0c0"/><rect x="10" y="12" width="1" height="1" fill="#c0c0c0"/><rect x="5" y="13" width="1" height="1" fill="#c0c0c0"/><rect x="7" y="13" width="1" height="1" fill="#c0c0c0"/><rect x="9" y="13" width="1" height="1" fill="#c0c0c0"/><rect x="11" y="13" width="1" height="1" fill="#c0c0c0"/><rect x="10" y="3" width="1" height="10" fill="#00ffff"/><rect x="6" y="6" width="1" height="1" fill="#00ffff"/><rect x="7" y="7" width="1" height="1" fill="#00ffff"/><rect x="8" y="8" width="1" height="1" fill="#00ffff"/><g shape-rendering="geometricPrecision"><circle cx="3.2" cy="11" r="3.3" fill="#ff0000"/><path d="M1.4 9.2 L5 12.8 M5 9.2 L1.4 12.8" stroke="#fff" stroke-width="1.1"/></g></svg>
<span class="t" style="left:119px;top:203px;font-size:12px;line-height:14px;font-weight:bold;">CPU 410-5H</span>
<svg style="left:102px;top:234px" width="10" height="17" viewBox="-1 0 10 17"><rect x="0" y="0" width="8" height="16" fill="#000"/><rect x="1" y="1" width="1" height="13" fill="#fff"/><rect x="1" y="1" width="5" height="1" fill="#fff"/><rect x="7" y="0" width="1" height="1" fill="#fff"/><rect x="2" y="2" width="2" height="1" fill="#00ffff"/><rect x="2" y="3" width="2" height="1" fill="#707070"/><rect x="5" y="3" width="1" height="1" fill="#b0b0b0"/><rect x="2" y="4" width="2" height="1" fill="#00ffff"/><rect x="2" y="5" width="2" height="1" fill="#707070"/><rect x="5" y="5" width="1" height="1" fill="#b0b0b0"/><rect x="2" y="6" width="2" height="1" fill="#00ffff"/><rect x="2" y="7" width="2" height="1" fill="#707070"/><rect x="5" y="7" width="1" height="1" fill="#b0b0b0"/><rect x="2" y="8" width="2" height="1" fill="#00ffff"/><rect x="2" y="9" width="2" height="1" fill="#707070"/><rect x="5" y="9" width="1" height="1" fill="#b0b0b0"/><rect x="2" y="10" width="2" height="1" fill="#00ffff"/><rect x="2" y="11" width="2" height="1" fill="#707070"/><rect x="5" y="11" width="1" height="1" fill="#b0b0b0"/><rect x="2" y="12" width="2" height="1" fill="#00ffff"/><rect x="2" y="13" width="2" height="1" fill="#707070"/><rect x="5" y="13" width="1" height="1" fill="#b0b0b0"/></svg>
<span class="t" style="left:119px;top:235px;font-size:12px;line-height:14px;font-style:italic;transform:scaleX(0.88);transform-origin:0 0;">DP</span>
<svg style="left:102px;top:250px" width="10" height="17" viewBox="-1 0 10 17"><rect x="0" y="0" width="8" height="16" fill="#000"/><rect x="1" y="1" width="1" height="13" fill="#fff"/><rect x="1" y="1" width="5" height="1" fill="#fff"/><rect x="7" y="0" width="1" height="1" fill="#fff"/><rect x="2" y="2" width="2" height="1" fill="#00ffff"/><rect x="2" y="3" width="2" height="1" fill="#707070"/><rect x="5" y="3" width="1" height="1" fill="#b0b0b0"/><rect x="2" y="4" width="2" height="1" fill="#00ffff"/><rect x="2" y="5" width="2" height="1" fill="#707070"/><rect x="5" y="5" width="1" height="1" fill="#b0b0b0"/><rect x="2" y="6" width="2" height="1" fill="#00ffff"/><rect x="2" y="7" width="2" height="1" fill="#707070"/><rect x="5" y="7" width="1" height="1" fill="#b0b0b0"/><rect x="2" y="8" width="2" height="1" fill="#00ffff"/><rect x="2" y="9" width="2" height="1" fill="#707070"/><rect x="5" y="9" width="1" height="1" fill="#b0b0b0"/><rect x="2" y="10" width="2" height="1" fill="#00ffff"/><rect x="2" y="11" width="2" height="1" fill="#707070"/><rect x="5" y="11" width="1" height="1" fill="#b0b0b0"/><rect x="2" y="12" width="2" height="1" fill="#00ffff"/><rect x="2" y="13" width="2" height="1" fill="#707070"/><rect x="5" y="13" width="1" height="1" fill="#b0b0b0"/></svg>
<span class="t" style="left:119px;top:251px;font-size:12px;line-height:14px;font-style:italic;transform:scaleX(0.88);transform-origin:0 0;">MPI/DP</span>
<svg style="left:102px;top:298px" width="10" height="17" viewBox="-1 0 10 17"><rect x="0" y="0" width="8" height="16" fill="#000"/><rect x="1" y="1" width="1" height="13" fill="#fff"/><rect x="1" y="1" width="5" height="1" fill="#fff"/><rect x="7" y="0" width="1" height="1" fill="#fff"/><rect x="2" y="2" width="2" height="1" fill="#00ffff"/><rect x="2" y="3" width="2" height="1" fill="#707070"/><rect x="5" y="3" width="1" height="1" fill="#b0b0b0"/><rect x="2" y="4" width="2" height="1" fill="#00ffff"/><rect x="2" y="5" width="2" height="1" fill="#707070"/><rect x="5" y="5" width="1" height="1" fill="#b0b0b0"/><rect x="2" y="6" width="2" height="1" fill="#00ffff"/><rect x="2" y="7" width="2" height="1" fill="#707070"/><rect x="5" y="7" width="1" height="1" fill="#b0b0b0"/><rect x="2" y="8" width="2" height="1" fill="#00ffff"/><rect x="2" y="9" width="2" height="1" fill="#707070"/><rect x="5" y="9" width="1" height="1" fill="#b0b0b0"/><rect x="2" y="10" width="2" height="1" fill="#00ffff"/><rect x="2" y="11" width="2" height="1" fill="#707070"/><rect x="5" y="11" width="1" height="1" fill="#b0b0b0"/><rect x="2" y="12" width="2" height="1" fill="#00ffff"/><rect x="2" y="13" width="2" height="1" fill="#707070"/><rect x="5" y="13" width="1" height="1" fill="#b0b0b0"/></svg>
<span class="t" style="left:119px;top:299px;font-size:12px;line-height:14px;font-style:italic;transform:scaleX(0.88);transform-origin:0 0;">PN-IO-X5</span>
<svg style="left:102px;top:314px" width="10" height="17" viewBox="-1 0 10 17"><rect x="0" y="0" width="8" height="16" fill="#000"/><rect x="1" y="1" width="1" height="13" fill="#fff"/><rect x="1" y="1" width="5" height="1" fill="#fff"/><rect x="7" y="0" width="1" height="1" fill="#fff"/><rect x="2" y="2" width="2" height="1" fill="#00ffff"/><rect x="2" y="3" width="2" height="1" fill="#707070"/><rect x="5" y="3" width="1" height="1" fill="#b0b0b0"/><rect x="2" y="4" width="2" height="1" fill="#00ffff"/><rect x="2" y="5" width="2" height="1" fill="#707070"/><rect x="5" y="5" width="1" height="1" fill="#b0b0b0"/><rect x="2" y="6" width="2" height="1" fill="#00ffff"/><rect x="2" y="7" width="2" height="1" fill="#707070"/><rect x="5" y="7" width="1" height="1" fill="#b0b0b0"/><rect x="2" y="8" width="2" height="1" fill="#00ffff"/><rect x="2" y="9" width="2" height="1" fill="#707070"/><rect x="5" y="9" width="1" height="1" fill="#b0b0b0"/><rect x="2" y="10" width="2" height="1" fill="#00ffff"/><rect x="2" y="11" width="2" height="1" fill="#707070"/><rect x="5" y="11" width="1" height="1" fill="#b0b0b0"/><rect x="2" y="12" width="2" height="1" fill="#00ffff"/><rect x="2" y="13" width="2" height="1" fill="#707070"/><rect x="5" y="13" width="1" height="1" fill="#b0b0b0"/></svg>
<span class="t" style="left:119px;top:315px;font-size:12px;line-height:14px;font-style:italic;transform:scaleX(0.88);transform-origin:0 0;">Port 1</span>
<svg style="left:102px;top:330px" width="10" height="17" viewBox="-1 0 10 17"><rect x="0" y="0" width="8" height="16" fill="#000"/><rect x="1" y="1" width="1" height="13" fill="#fff"/><rect x="1" y="1" width="5" height="1" fill="#fff"/><rect x="7" y="0" width="1" height="1" fill="#fff"/><rect x="2" y="2" width="2" height="1" fill="#00ffff"/><rect x="2" y="3" width="2" height="1" fill="#707070"/><rect x="5" y="3" width="1" height="1" fill="#b0b0b0"/><rect x="2" y="4" width="2" height="1" fill="#00ffff"/><rect x="2" y="5" width="2" height="1" fill="#707070"/><rect x="5" y="5" width="1" height="1" fill="#b0b0b0"/><rect x="2" y="6" width="2" height="1" fill="#00ffff"/><rect x="2" y="7" width="2" height="1" fill="#707070"/><rect x="5" y="7" width="1" height="1" fill="#b0b0b0"/><rect x="2" y="8" width="2" height="1" fill="#00ffff"/><rect x="2" y="9" width="2" height="1" fill="#707070"/><rect x="5" y="9" width="1" height="1" fill="#b0b0b0"/><rect x="2" y="10" width="2" height="1" fill="#00ffff"/><rect x="2" y="11" width="2" height="1" fill="#707070"/><rect x="5" y="11" width="1" height="1" fill="#b0b0b0"/><rect x="2" y="12" width="2" height="1" fill="#00ffff"/><rect x="2" y="13" width="2" height="1" fill="#707070"/><rect x="5" y="13" width="1" height="1" fill="#b0b0b0"/></svg>
<span class="t" style="left:119px;top:331px;font-size:12px;line-height:14px;font-style:italic;transform:scaleX(0.88);transform-origin:0 0;">Port 2</span>
<svg style="left:98px;top:346px" width="18" height="16" viewBox="0 0 18 16"><rect x="5" y="0" width="8" height="16" fill="#000"/><rect x="6" y="1" width="1" height="13" fill="#fff"/><rect x="6" y="1" width="5" height="1" fill="#fff"/><rect x="8" y="2" width="1" height="1" fill="#c0c0c0"/><rect x="10" y="2" width="1" height="1" fill="#c0c0c0"/><rect x="7" y="3" width="1" height="1" fill="#c0c0c0"/><rect x="9" y="3" width="1" height="1" fill="#c0c0c0"/><rect x="8" y="4" width="1" height="1" fill="#c0c0c0"/><rect x="10" y="4" width="1" height="1" fill="#c0c0c0"/><rect x="7" y="5" width="1" height="1" fill="#c0c0c0"/><rect x="9" y="5" width="1" height="1" fill="#c0c0c0"/><rect x="8" y="6" width="1" height="1" fill="#c0c0c0"/><rect x="10" y="6" width="1" height="1" fill="#c0c0c0"/><rect x="7" y="7" width="1" height="1" fill="#c0c0c0"/><rect x="9" y="7" width="1" height="1" fill="#c0c0c0"/><rect x="8" y="8" width="1" height="1" fill="#c0c0c0"/><rect x="10" y="8" width="1" height="1" fill="#c0c0c0"/><rect x="7" y="9" width="1" height="1" fill="#c0c0c0"/><rect x="9" y="9" width="1" height="1" fill="#c0c0c0"/><rect x="8" y="10" width="1" height="1" fill="#c0c0c0"/><rect x="10" y="10" width="1" height="1" fill="#c0c0c0"/><rect x="7" y="11" width="1" height="1" fill="#c0c0c0"/><rect x="9" y="11" width="1" height="1" fill="#c0c0c0"/><rect x="8" y="12" width="1" height="1" fill="#c0c0c0"/><rect x="10" y="12" width="1" height="1" fill="#c0c0c0"/><rect x="7" y="13" width="1" height="1" fill="#c0c0c0"/><rect x="9" y="13" width="1" height="1" fill="#c0c0c0"/><rect x="1" y="3" width="1" height="3" fill="#0000ff"/><rect x="1" y="5" width="4" height="1" fill="#0000ff"/><rect x="16" y="3" width="1" height="3" fill="#0000ff"/><rect x="13" y="5" width="4" height="1" fill="#0000ff"/><rect x="16" y="9" width="1" height="3" fill="#0000ff"/><rect x="13" y="9" width="4" height="1" fill="#0000ff"/><g shape-rendering="geometricPrecision"><path d="M6 6.6 L11 11.4 L6 15.8 L1 11.4 Z" fill="#fff" stroke="#000090" stroke-width="1.35"/><rect x="5.1" y="9.2" width="1.9" height="4.4" fill="#000080"/></g></svg>
<span class="t" style="left:119px;top:347px;font-size:12px;line-height:14px;font-weight:bold;">CP 443-1</span>
<svg style="left:102px;top:362px" width="10" height="17" viewBox="-1 0 10 17"><rect x="0" y="0" width="8" height="16" fill="#000"/><rect x="1" y="1" width="1" height="13" fill="#fff"/><rect x="1" y="1" width="5" height="1" fill="#fff"/><rect x="7" y="0" width="1" height="1" fill="#fff"/><rect x="2" y="2" width="2" height="1" fill="#00ffff"/><rect x="2" y="3" width="2" height="1" fill="#707070"/><rect x="5" y="3" width="1" height="1" fill="#b0b0b0"/><rect x="2" y="4" width="2" height="1" fill="#00ffff"/><rect x="2" y="5" width="2" height="1" fill="#707070"/><rect x="5" y="5" width="1" height="1" fill="#b0b0b0"/><rect x="2" y="6" width="2" height="1" fill="#00ffff"/><rect x="2" y="7" width="2" height="1" fill="#707070"/><rect x="5" y="7" width="1" height="1" fill="#b0b0b0"/><rect x="2" y="8" width="2" height="1" fill="#00ffff"/><rect x="2" y="9" width="2" height="1" fill="#707070"/><rect x="5" y="9" width="1" height="1" fill="#b0b0b0"/><rect x="2" y="10" width="2" height="1" fill="#00ffff"/><rect x="2" y="11" width="2" height="1" fill="#707070"/><rect x="5" y="11" width="1" height="1" fill="#b0b0b0"/><rect x="2" y="12" width="2" height="1" fill="#00ffff"/><rect x="2" y="13" width="2" height="1" fill="#707070"/><rect x="5" y="13" width="1" height="1" fill="#b0b0b0"/></svg>
<span class="t" style="left:119px;top:363px;font-size:12px;line-height:14px;font-style:italic;transform:scaleX(0.88);transform-origin:0 0;">PB-IO</span>
<svg style="left:102px;top:378px" width="10" height="17" viewBox="-1 0 10 17"><rect x="0" y="0" width="8" height="16" fill="#000"/><rect x="1" y="1" width="1" height="13" fill="#fff"/><rect x="1" y="1" width="5" height="1" fill="#fff"/><rect x="7" y="0" width="1" height="1" fill="#fff"/><rect x="2" y="2" width="2" height="1" fill="#00ffff"/><rect x="2" y="3" width="2" height="1" fill="#707070"/><rect x="5" y="3" width="1" height="1" fill="#b0b0b0"/><rect x="2" y="4" width="2" height="1" fill="#00ffff"/><rect x="2" y="5" width="2" height="1" fill="#707070"/><rect x="5" y="5" width="1" height="1" fill="#b0b0b0"/><rect x="2" y="6" width="2" height="1" fill="#00ffff"/><rect x="2" y="7" width="2" height="1" fill="#707070"/><rect x="5" y="7" width="1" height="1" fill="#b0b0b0"/><rect x="2" y="8" width="2" height="1" fill="#00ffff"/><rect x="2" y="9" width="2" height="1" fill="#707070"/><rect x="5" y="9" width="1" height="1" fill="#b0b0b0"/><rect x="2" y="10" width="2" height="1" fill="#00ffff"/><rect x="2" y="11" width="2" height="1" fill="#707070"/><rect x="5" y="11" width="1" height="1" fill="#b0b0b0"/><rect x="2" y="12" width="2" height="1" fill="#00ffff"/><rect x="2" y="13" width="2" height="1" fill="#707070"/><rect x="5" y="13" width="1" height="1" fill="#b0b0b0"/></svg>
<span class="t" style="left:119px;top:379px;font-size:12px;line-height:14px;font-style:italic;transform:scaleX(0.88);transform-origin:0 0;">Port 1</span>
<svg style="left:102px;top:394px" width="10" height="17" viewBox="-1 0 10 17"><rect x="0" y="0" width="8" height="16" fill="#000"/><rect x="1" y="1" width="1" height="13" fill="#fff"/><rect x="1" y="1" width="5" height="1" fill="#fff"/><rect x="7" y="0" width="1" height="1" fill="#fff"/><rect x="2" y="2" width="2" height="1" fill="#00ffff"/><rect x="2" y="3" width="2" height="1" fill="#707070"/><rect x="5" y="3" width="1" height="1" fill="#b0b0b0"/><rect x="2" y="4" width="2" height="1" fill="#00ffff"/><rect x="2" y="5" width="2" height="1" fill="#707070"/><rect x="5" y="5" width="1" height="1" fill="#b0b0b0"/><rect x="2" y="6" width="2" height="1" fill="#00ffff"/><rect x="2" y="7" width="2" height="1" fill="#707070"/><rect x="5" y="7" width="1" height="1" fill="#b0b0b0"/><rect x="2" y="8" width="2" height="1" fill="#00ffff"/><rect x="2" y="9" width="2" height="1" fill="#707070"/><rect x="5" y="9" width="1" height="1" fill="#b0b0b0"/><rect x="2" y="10" width="2" height="1" fill="#00ffff"/><rect x="2" y="11" width="2" height="1" fill="#707070"/><rect x="5" y="11" width="1" height="1" fill="#b0b0b0"/><rect x="2" y="12" width="2" height="1" fill="#00ffff"/><rect x="2" y="13" width="2" height="1" fill="#707070"/><rect x="5" y="13" width="1" height="1" fill="#b0b0b0"/></svg>
<span class="t" style="left:119px;top:395px;font-size:12px;line-height:14px;font-style:italic;transform:scaleX(0.88);transform-origin:0 0;">Port 2</span>
<div style="left:0px;top:556px;width:841px;height:1px;background:#fff;"></div>
<div style="left:0px;top:557px;width:841px;height:17px;background:#f0f0f0;"></div>
<div style="left:11px;top:557px;width:830px;height:15px;background:#cdcdcd;"></div>
<svg style="left:0;top:560px;shape-rendering:geometricPrecision" width="8" height="9" viewBox="0 0 8 9"><path d="M4.6 0.8 L0.8 4.5 L4.6 8.2" fill="none" stroke="#333" stroke-width="2.1"/></svg>
<div style="left:0px;top:574px;width:841px;height:1px;background:#fff;"></div>
<div style="left:0px;top:575px;width:841px;height:3px;background:#f0f0f0;"></div>
<div style="left:0px;top:578px;width:841px;height:1px;background:#a0a0a0;"></div>
<div style="left:0px;top:579px;width:841px;height:1px;background:#696969;"></div>
<div style="left:0px;top:580px;width:841px;height:1px;background:#fff;"></div>
<div style="left:0px;top:581px;width:841px;height:280px;background:#f0f0f0;"></div>
<div style="left:5px;top:591px;width:22px;height:22px;background:#c0c0c0;border-top:1px solid #fff;border-left:1px solid #fff;border-right:1px solid #585858;border-bottom:1px solid #000;"></div>
<div style="left:27px;top:591px;width:23px;height:22px;background:#c0c0c0;border-top:1px solid #fff;border-left:1px solid #fff;border-right:1px solid #000;border-bottom:1px solid #000;"></div>
<svg style="left:5px;top:591px;shape-rendering:geometricPrecision" width="46" height="22" viewBox="0 0 46 22"><path d="M3.2 10.5 L10 4 L10 7.3 L18.7 7.3 L18.7 13.7 L10 13.7 L10 17 Z" fill="#000080" stroke="#000" stroke-width="0.9"/><path d="M42.4 11.4 L35.6 5 L35.6 8.2 L26.2 8.2 L26.2 14.6 L35.6 14.6 L35.6 17.8 Z" fill="#fff"/><path d="M41.5 10.5 L34.7 4.1 L34.7 7.2 L25.2 7.2 L25.2 13.7 L34.7 13.7 L34.7 17 Z" fill="#808080"/></svg>
<span class="t" style="left:56.5px;top:595px;font-size:12px;line-height:14px;transform:scaleX(0.7974);transform-origin:0 0;">(3)</span>
<span class="t" style="left:77.3px;top:595px;font-size:12px;line-height:14px;transform:scaleX(0.8744);transform-origin:0 0;">pn-r01-et200sp-1</span>
<div style="left:5px;top:621px;width:836px;height:19px;background:#f0f0f0;"></div>
<div style="left:5px;top:621px;width:836px;height:1px;background:#fff;"></div>
<div style="left:5px;top:639px;width:836px;height:1px;background:#a0a0a0;"></div>
<div style="left:5px;top:621px;width:1px;height:18px;background:#fff;"></div>
<div style="left:65px;top:622px;width:1px;height:18px;background:#a0a0a0;"></div>
<div style="left:66px;top:621px;width:1px;height:19px;background:#696969;"></div>
<div style="left:67px;top:621px;width:1px;height:18px;background:#fff;"></div>
<div style="left:279px;top:622px;width:1px;height:18px;background:#a0a0a0;"></div>
<div style="left:280px;top:621px;width:1px;height:19px;background:#696969;"></div>
<div style="left:281px;top:621px;width:1px;height:18px;background:#fff;"></div>
<div style="left:438px;top:622px;width:1px;height:18px;background:#a0a0a0;"></div>
<div style="left:439px;top:621px;width:1px;height:19px;background:#696969;"></div>
<div style="left:440px;top:621px;width:1px;height:18px;background:#fff;"></div>
<div style="left:501px;top:622px;width:1px;height:18px;background:#a0a0a0;"></div>
<div style="left:502px;top:621px;width:1px;height:19px;background:#696969;"></div>
<div style="left:503px;top:621px;width:1px;height:18px;background:#fff;"></div>
<div style="left:570px;top:622px;width:1px;height:18px;background:#a0a0a0;"></div>
<div style="left:571px;top:621px;width:1px;height:19px;background:#696969;"></div>
<div style="left:572px;top:621px;width:1px;height:18px;background:#fff;"></div>
<div style="left:698px;top:622px;width:1px;height:18px;background:#a0a0a0;"></div>
<div style="left:699px;top:621px;width:1px;height:19px;background:#696969;"></div>
<div style="left:700px;top:621px;width:1px;height:18px;background:#fff;"></div>
<div style="left:761px;top:622px;width:1px;height:18px;background:#a0a0a0;"></div>
<div style="left:762px;top:621px;width:1px;height:19px;background:#696969;"></div>
<div style="left:763px;top:621px;width:1px;height:18px;background:#fff;"></div>
<div style="left:73px;top:623px;width:16px;height:16px;background:#c0c0c0;"></div>
<svg style="left:77px;top:623px" width="10" height="17" viewBox="-1 0 10 17"><rect x="0" y="0" width="8" height="16" fill="#000"/><rect x="1" y="1" width="1" height="13" fill="#fff"/><rect x="1" y="1" width="5" height="1" fill="#fff"/><rect x="7" y="0" width="1" height="1" fill="#fff"/><rect x="2" y="2" width="2" height="1" fill="#00ffff"/><rect x="2" y="3" width="2" height="1" fill="#707070"/><rect x="5" y="3" width="1" height="1" fill="#b0b0b0"/><rect x="2" y="4" width="2" height="1" fill="#00ffff"/><rect x="2" y="5" width="2" height="1" fill="#707070"/><rect x="5" y="5" width="1" height="1" fill="#b0b0b0"/><rect x="2" y="6" width="2" height="1" fill="#00ffff"/><rect x="2" y="7" width="2" height="1" fill="#707070"/><rect x="5" y="7" width="1" height="1" fill="#b0b0b0"/><rect x="2" y="8" width="2" height="1" fill="#00ffff"/><rect x="2" y="9" width="2" height="1" fill="#707070"/><rect x="5" y="9" width="1" height="1" fill="#b0b0b0"/><rect x="2" y="10" width="2" height="1" fill="#00ffff"/><rect x="2" y="11" width="2" height="1" fill="#707070"/><rect x="5" y="11" width="1" height="1" fill="#b0b0b0"/><rect x="2" y="12" width="2" height="1" fill="#00ffff"/><rect x="2" y="13" width="2" height="1" fill="#707070"/><rect x="5" y="13" width="1" height="1" fill="#b0b0b0"/></svg>
<span class="t" style="left:11.7px;top:624px;font-size:12px;line-height:14px;transform:scaleX(0.8701);transform-origin:0 0;">Slot</span>
<span class="t" style="left:101.6px;top:624px;font-size:12px;line-height:14px;transform:scaleX(0.8765);transform-origin:0 0;">Module</span>
<span class="t" style="left:287.8px;top:624px;font-size:12px;line-height:14px;transform:scaleX(0.8500);transform-origin:0 0;">Order number</span>
<span class="t" style="left:447px;top:624px;font-size:12px;line-height:14px;transform:scaleX(0.8595);transform-origin:0 0;">I Address</span>
<span class="t" style="left:509.7px;top:624px;font-size:12px;line-height:14px;transform:scaleX(0.8562);transform-origin:0 0;">Q address</span>
<span class="t" style="left:578.8px;top:624px;font-size:12px;line-height:14px;transform:scaleX(0.8751);transform-origin:0 0;">Diagnostic Address</span>
<span class="t" style="left:706.9px;top:624px;font-size:12px;line-height:14px;transform:scaleX(0.8305);transform-origin:0 0;">Comment</span>
<span class="t" style="left:769.3px;top:624px;font-size:12px;line-height:14px;transform:scaleX(0.9047);transform-origin:0 0;">Access</span>
<div style="left:5px;top:640px;width:836px;height:221px;background:#eeeeee;"></div>
<div style="left:5px;top:640px;width:1px;height:221px;background:#a0a0a0;"></div>
<div style="left:6px;top:640px;width:1px;height:221px;background:#696969;"></div>
<div style="left:65px;top:654px;width:776px;height:3px;background:#fff"></div><div style="left:65px;top:670px;width:776px;height:3px;background:#fff"></div><div style="left:71px;top:656px;width:10px;height:16px;background:#fff"></div><div style="left:65px;top:686px;width:776px;height:3px;background:#fff"></div><div style="left:71px;top:672px;width:10px;height:16px;background:#fff"></div><div style="left:10px;top:702px;width:831px;height:3px;background:#fff"></div><div style="left:71px;top:688px;width:10px;height:16px;background:#fff"></div><div style="left:10px;top:718px;width:831px;height:3px;background:#fff"></div><div style="left:71px;top:704px;width:10px;height:16px;background:#fff"></div><div style="left:10px;top:734px;width:831px;height:3px;background:#fff"></div><div style="left:71px;top:720px;width:10px;height:16px;background:#fff"></div><div style="left:10px;top:750px;width:831px;height:3px;background:#fff"></div><div style="left:71px;top:736px;width:10px;height:16px;background:#fff"></div><div style="left:10px;top:766px;width:831px;height:3px;background:#fff"></div><div style="left:71px;top:752px;width:10px;height:16px;background:#fff"></div><div style="left:10px;top:782px;width:831px;height:3px;background:#fff"></div><div style="left:71px;top:768px;width:10px;height:16px;background:#fff"></div><div style="left:10px;top:798px;width:831px;height:3px;background:#fff"></div><div style="left:71px;top:784px;width:10px;height:16px;background:#fff"></div><div style="left:10px;top:814px;width:831px;height:3px;background:#fff"></div><div style="left:71px;top:800px;width:10px;height:16px;background:#fff"></div><div style="left:10px;top:830px;width:831px;height:3px;background:#fff"></div><div style="left:71px;top:816px;width:10px;height:16px;background:#fff"></div><div style="left:10px;top:846px;width:831px;height:3px;background:#fff"></div><div style="left:10px;top:862px;width:831px;height:3px;background:#fff"></div><div style="left:65px;top:640px;width:3px;height:221px;background:#fff"></div><div style="left:279px;top:640px;width:3px;height:221px;background:#fff"></div><div style="left:438px;top:640px;width:3px;height:221px;background:#fff"></div><div style="left:501px;top:640px;width:3px;height:221px;background:#fff"></div><div style="left:570px;top:640px;width:3px;height:221px;background:#fff"></div><div style="left:698px;top:640px;width:3px;height:221px;background:#fff"></div><div style="left:761px;top:640px;width:3px;height:221px;background:#fff"></div>
<div style="left:66px;top:655px;width:775px;height:1px;background:#000;"></div>
<span class="t" style="left:17.8px;top:641px;font-size:12px;line-height:14px;font-weight:bold;font-style:italic;transform:scaleX(0.875);transform-origin:0 0;">0</span>
<svg style="left:69px;top:640px" width="14" height="16" viewBox="0 0 14 16"><rect x="0" y="1" width="12" height="1" fill="#000"/><rect x="5" y="2" width="3" height="2" fill="#0000ff"/><rect x="6" y="4" width="1" height="2" fill="#000"/><rect x="1" y="6" width="12" height="10" fill="#000"/><rect x="3" y="7" width="1" height="1" fill="#c0c0c0"/><rect x="5" y="7" width="1" height="1" fill="#c0c0c0"/><rect x="7" y="7" width="1" height="1" fill="#c0c0c0"/><rect x="9" y="7" width="1" height="1" fill="#c0c0c0"/><rect x="4" y="8" width="1" height="1" fill="#c0c0c0"/><rect x="6" y="8" width="1" height="1" fill="#c0c0c0"/><rect x="8" y="8" width="1" height="1" fill="#c0c0c0"/><rect x="10" y="8" width="1" height="1" fill="#c0c0c0"/><rect x="3" y="9" width="1" height="1" fill="#c0c0c0"/><rect x="5" y="9" width="1" height="1" fill="#c0c0c0"/><rect x="7" y="9" width="1" height="1" fill="#c0c0c0"/><rect x="9" y="9" width="1" height="1" fill="#c0c0c0"/><rect x="4" y="10" width="1" height="1" fill="#c0c0c0"/><rect x="6" y="10" width="1" height="1" fill="#c0c0c0"/><rect x="8" y="10" width="1" height="1" fill="#c0c0c0"/><rect x="10" y="10" width="1" height="1" fill="#c0c0c0"/><rect x="3" y="11" width="1" height="1" fill="#c0c0c0"/><rect x="5" y="11" width="1" height="1" fill="#c0c0c0"/><rect x="7" y="11" width="1" height="1" fill="#c0c0c0"/><rect x="9" y="11" width="1" height="1" fill="#c0c0c0"/><rect x="4" y="12" width="1" height="1" fill="#c0c0c0"/><rect x="6" y="12" width="1" height="1" fill="#c0c0c0"/><rect x="8" y="12" width="1" height="1" fill="#c0c0c0"/><rect x="10" y="12" width="1" height="1" fill="#c0c0c0"/><rect x="3" y="13" width="1" height="1" fill="#c0c0c0"/><rect x="5" y="13" width="1" height="1" fill="#c0c0c0"/><rect x="7" y="13" width="1" height="1" fill="#c0c0c0"/><rect x="9" y="13" width="1" height="1" fill="#c0c0c0"/><rect x="2" y="7" width="1" height="8" fill="#fff"/></svg>
<span class="t" style="left:89.9px;top:641px;font-size:12px;line-height:14px;font-weight:bold;font-style:italic;transform:scaleX(1.0141);transform-origin:0 0;">pn-r01-et200sp-1</span>
<span class="t" style="left:284.3px;top:641px;font-size:12px;line-height:14px;font-weight:bold;font-style:italic;transform:scaleX(1.0307);transform-origin:0 0;">6ES7 155-6AU01-0BN0</span>
<span class="t" style="left:576.7px;top:641px;font-size:12px;line-height:14px;font-weight:bold;font-style:italic;transform:scaleX(0.875);transform-origin:0 0;">16337*</span>
<span class="t" style="left:766.5px;top:641px;font-size:12px;line-height:14px;font-weight:bold;font-style:italic;transform:scaleX(0.875);transform-origin:0 0;">Full</span>
<div style="left:66px;top:671px;width:775px;height:1px;background:#000;"></div>
<span class="t" style="left:12.5px;top:657px;font-size:12px;line-height:14px;font-style:italic;transform:scaleX(0.875);transform-origin:0 0;">X1</span>
<svg style="left:71px;top:656px" width="10" height="17" viewBox="-1 0 10 17"><rect x="0" y="0" width="8" height="16" fill="#000"/><rect x="1" y="1" width="1" height="13" fill="#fff"/><rect x="1" y="1" width="5" height="1" fill="#fff"/><rect x="7" y="0" width="1" height="1" fill="#fff"/><rect x="2" y="2" width="2" height="1" fill="#00ffff"/><rect x="2" y="3" width="2" height="1" fill="#707070"/><rect x="5" y="3" width="1" height="1" fill="#b0b0b0"/><rect x="2" y="4" width="2" height="1" fill="#00ffff"/><rect x="2" y="5" width="2" height="1" fill="#707070"/><rect x="5" y="5" width="1" height="1" fill="#b0b0b0"/><rect x="2" y="6" width="2" height="1" fill="#00ffff"/><rect x="2" y="7" width="2" height="1" fill="#707070"/><rect x="5" y="7" width="1" height="1" fill="#b0b0b0"/><rect x="2" y="8" width="2" height="1" fill="#00ffff"/><rect x="2" y="9" width="2" height="1" fill="#707070"/><rect x="5" y="9" width="1" height="1" fill="#b0b0b0"/><rect x="2" y="10" width="2" height="1" fill="#00ffff"/><rect x="2" y="11" width="2" height="1" fill="#707070"/><rect x="5" y="11" width="1" height="1" fill="#b0b0b0"/><rect x="2" y="12" width="2" height="1" fill="#00ffff"/><rect x="2" y="13" width="2" height="1" fill="#707070"/><rect x="5" y="13" width="1" height="1" fill="#b0b0b0"/></svg>
<span class="t" style="left:91px;top:657px;font-size:12px;line-height:14px;font-style:italic;transform:scaleX(0.875);transform-origin:0 0;">PN-IO</span>
<span class="t" style="left:576px;top:657px;font-size:12px;line-height:14px;font-style:italic;transform:scaleX(0.875);transform-origin:0 0;">16336*</span>
<span class="t" style="left:766px;top:657px;font-size:12px;line-height:14px;font-style:italic;transform:scaleX(0.875);transform-origin:0 0;">Full</span>
<div style="left:66px;top:687px;width:775px;height:1px;background:#000;"></div>
<span class="t" style="left:11.8px;top:673px;font-size:12px;line-height:14px;transform:scaleX(0.8948);transform-origin:0 0;">X1 P1 R</span>
<svg style="left:71px;top:672px" width="10" height="17" viewBox="-1 0 10 17"><rect x="0" y="0" width="8" height="16" fill="#000"/><rect x="1" y="1" width="1" height="13" fill="#fff"/><rect x="1" y="1" width="5" height="1" fill="#fff"/><rect x="7" y="0" width="1" height="1" fill="#fff"/><rect x="2" y="2" width="2" height="1" fill="#00ffff"/><rect x="2" y="3" width="2" height="1" fill="#707070"/><rect x="5" y="3" width="1" height="1" fill="#b0b0b0"/><rect x="2" y="4" width="2" height="1" fill="#00ffff"/><rect x="2" y="5" width="2" height="1" fill="#707070"/><rect x="5" y="5" width="1" height="1" fill="#b0b0b0"/><rect x="2" y="6" width="2" height="1" fill="#00ffff"/><rect x="2" y="7" width="2" height="1" fill="#707070"/><rect x="5" y="7" width="1" height="1" fill="#b0b0b0"/><rect x="2" y="8" width="2" height="1" fill="#00ffff"/><rect x="2" y="9" width="2" height="1" fill="#707070"/><rect x="5" y="9" width="1" height="1" fill="#b0b0b0"/><rect x="2" y="10" width="2" height="1" fill="#00ffff"/><rect x="2" y="11" width="2" height="1" fill="#707070"/><rect x="5" y="11" width="1" height="1" fill="#b0b0b0"/><rect x="2" y="12" width="2" height="1" fill="#00ffff"/><rect x="2" y="13" width="2" height="1" fill="#707070"/><rect x="5" y="13" width="1" height="1" fill="#b0b0b0"/></svg>
<span class="t" style="left:88.5px;top:673px;font-size:12px;line-height:14px;transform:scaleX(0.8663);transform-origin:0 0;">Port 1 (2xRJ45)</span>
<span class="t" style="left:283px;top:673px;font-size:12px;line-height:14px;transform:scaleX(0.875);transform-origin:0 0;">6ES7 193-6AR00-0AA0</span>
<span class="t" style="left:574px;top:673px;font-size:12px;line-height:14px;transform:scaleX(0.875);transform-origin:0 0;">16335*</span>
<span class="t" style="left:764px;top:673px;font-size:12px;line-height:14px;transform:scaleX(0.875);transform-origin:0 0;">Full</span>
<div style="left:11px;top:703px;width:830px;height:1px;background:#000;"></div>
<span class="t" style="left:11.8px;top:689px;font-size:12px;line-height:14px;transform:scaleX(0.8948);transform-origin:0 0;">X1 P2 R</span>
<svg style="left:71px;top:688px" width="10" height="17" viewBox="-1 0 10 17"><rect x="0" y="0" width="8" height="16" fill="#000"/><rect x="1" y="1" width="1" height="13" fill="#fff"/><rect x="1" y="1" width="5" height="1" fill="#fff"/><rect x="7" y="0" width="1" height="1" fill="#fff"/><rect x="2" y="2" width="2" height="1" fill="#00ffff"/><rect x="2" y="3" width="2" height="1" fill="#707070"/><rect x="5" y="3" width="1" height="1" fill="#b0b0b0"/><rect x="2" y="4" width="2" height="1" fill="#00ffff"/><rect x="2" y="5" width="2" height="1" fill="#707070"/><rect x="5" y="5" width="1" height="1" fill="#b0b0b0"/><rect x="2" y="6" width="2" height="1" fill="#00ffff"/><rect x="2" y="7" width="2" height="1" fill="#707070"/><rect x="5" y="7" width="1" height="1" fill="#b0b0b0"/><rect x="2" y="8" width="2" height="1" fill="#00ffff"/><rect x="2" y="9" width="2" height="1" fill="#707070"/><rect x="5" y="9" width="1" height="1" fill="#b0b0b0"/><rect x="2" y="10" width="2" height="1" fill="#00ffff"/><rect x="2" y="11" width="2" height="1" fill="#707070"/><rect x="5" y="11" width="1" height="1" fill="#b0b0b0"/><rect x="2" y="12" width="2" height="1" fill="#00ffff"/><rect x="2" y="13" width="2" height="1" fill="#707070"/><rect x="5" y="13" width="1" height="1" fill="#b0b0b0"/></svg>
<span class="t" style="left:88.5px;top:689px;font-size:12px;line-height:14px;transform:scaleX(0.8663);transform-origin:0 0;">Port 2 (2xRJ45)</span>
<span class="t" style="left:283px;top:689px;font-size:12px;line-height:14px;transform:scaleX(0.875);transform-origin:0 0;">6ES7 193-6AR00-0AA0</span>
<span class="t" style="left:574px;top:689px;font-size:12px;line-height:14px;transform:scaleX(0.875);transform-origin:0 0;">16334*</span>
<span class="t" style="left:764px;top:689px;font-size:12px;line-height:14px;transform:scaleX(0.875);transform-origin:0 0;">Full</span>
<div style="left:11px;top:719px;width:830px;height:1px;background:#000;"></div>
<span class="t" style="left:11.8px;top:705px;font-size:12px;line-height:14px;transform:scaleX(0.875);transform-origin:0 0;">1</span>
<svg style="left:71px;top:704px" width="10" height="17" viewBox="-1 0 10 17"><rect x="0" y="0" width="8" height="16" fill="#000"/><rect x="1" y="1" width="1" height="13" fill="#fff"/><rect x="1" y="1" width="5" height="1" fill="#fff"/><rect x="7" y="0" width="1" height="1" fill="#fff"/><rect x="2" y="2" width="2" height="1" fill="#00ffff"/><rect x="2" y="3" width="2" height="1" fill="#707070"/><rect x="5" y="3" width="1" height="1" fill="#b0b0b0"/><rect x="2" y="4" width="2" height="1" fill="#00ffff"/><rect x="2" y="5" width="2" height="1" fill="#707070"/><rect x="5" y="5" width="1" height="1" fill="#b0b0b0"/><rect x="2" y="6" width="2" height="1" fill="#00ffff"/><rect x="2" y="7" width="2" height="1" fill="#707070"/><rect x="5" y="7" width="1" height="1" fill="#b0b0b0"/><rect x="2" y="8" width="2" height="1" fill="#00ffff"/><rect x="2" y="9" width="2" height="1" fill="#707070"/><rect x="5" y="9" width="1" height="1" fill="#b0b0b0"/><rect x="2" y="10" width="2" height="1" fill="#00ffff"/><rect x="2" y="11" width="2" height="1" fill="#707070"/><rect x="5" y="11" width="1" height="1" fill="#b0b0b0"/><rect x="2" y="12" width="2" height="1" fill="#00ffff"/><rect x="2" y="13" width="2" height="1" fill="#707070"/><rect x="5" y="13" width="1" height="1" fill="#b0b0b0"/></svg>
<span class="t" style="left:88.5px;top:705px;font-size:12px;line-height:14px;transform:scaleX(0.8928);transform-origin:0 0;">DI 16x24VDC ST V0.0</span>
<span class="t" style="left:283px;top:705px;font-size:12px;line-height:14px;transform:scaleX(0.875);transform-origin:0 0;">6ES7 131-6BH01-0BA0</span>
<span class="t" style="left:441px;top:705px;font-size:12px;line-height:14px;transform:scaleX(0.875);transform-origin:0 0;">0...1</span>
<span class="t" style="left:764px;top:705px;font-size:12px;line-height:14px;transform:scaleX(0.875);transform-origin:0 0;">Full</span>
<div style="left:11px;top:735px;width:830px;height:1px;background:#000;"></div>
<span class="t" style="left:11.8px;top:721px;font-size:12px;line-height:14px;transform:scaleX(0.875);transform-origin:0 0;">2</span>
<svg style="left:71px;top:720px" width="10" height="17" viewBox="-1 0 10 17"><rect x="0" y="0" width="8" height="16" fill="#000"/><rect x="1" y="1" width="1" height="13" fill="#fff"/><rect x="1" y="1" width="5" height="1" fill="#fff"/><rect x="7" y="0" width="1" height="1" fill="#fff"/><rect x="2" y="2" width="2" height="1" fill="#00ffff"/><rect x="2" y="3" width="2" height="1" fill="#707070"/><rect x="5" y="3" width="1" height="1" fill="#b0b0b0"/><rect x="2" y="4" width="2" height="1" fill="#00ffff"/><rect x="2" y="5" width="2" height="1" fill="#707070"/><rect x="5" y="5" width="1" height="1" fill="#b0b0b0"/><rect x="2" y="6" width="2" height="1" fill="#00ffff"/><rect x="2" y="7" width="2" height="1" fill="#707070"/><rect x="5" y="7" width="1" height="1" fill="#b0b0b0"/><rect x="2" y="8" width="2" height="1" fill="#00ffff"/><rect x="2" y="9" width="2" height="1" fill="#707070"/><rect x="5" y="9" width="1" height="1" fill="#b0b0b0"/><rect x="2" y="10" width="2" height="1" fill="#00ffff"/><rect x="2" y="11" width="2" height="1" fill="#707070"/><rect x="5" y="11" width="1" height="1" fill="#b0b0b0"/><rect x="2" y="12" width="2" height="1" fill="#00ffff"/><rect x="2" y="13" width="2" height="1" fill="#707070"/><rect x="5" y="13" width="1" height="1" fill="#b0b0b0"/></svg>
<span class="t" style="left:88.5px;top:721px;font-size:12px;line-height:14px;transform:scaleX(0.8928);transform-origin:0 0;">DI 16x24VDC ST V0.0</span>
<span class="t" style="left:283px;top:721px;font-size:12px;line-height:14px;transform:scaleX(0.875);transform-origin:0 0;">6ES7 131-6BH01-0BA0</span>
<span class="t" style="left:441px;top:721px;font-size:12px;line-height:14px;transform:scaleX(0.875);transform-origin:0 0;">2...3</span>
<span class="t" style="left:764px;top:721px;font-size:12px;line-height:14px;transform:scaleX(0.875);transform-origin:0 0;">Full</span>
<div style="left:11px;top:751px;width:830px;height:1px;background:#000;"></div>
<span class="t" style="left:11.8px;top:737px;font-size:12px;line-height:14px;transform:scaleX(0.875);transform-origin:0 0;">3</span>
<svg style="left:71px;top:736px" width="10" height="17" viewBox="-1 0 10 17"><rect x="0" y="0" width="8" height="16" fill="#000"/><rect x="1" y="1" width="1" height="13" fill="#fff"/><rect x="1" y="1" width="5" height="1" fill="#fff"/><rect x="7" y="0" width="1" height="1" fill="#fff"/><rect x="2" y="2" width="2" height="1" fill="#00ffff"/><rect x="2" y="3" width="2" height="1" fill="#707070"/><rect x="5" y="3" width="1" height="1" fill="#b0b0b0"/><rect x="2" y="4" width="2" height="1" fill="#00ffff"/><rect x="2" y="5" width="2" height="1" fill="#707070"/><rect x="5" y="5" width="1" height="1" fill="#b0b0b0"/><rect x="2" y="6" width="2" height="1" fill="#00ffff"/><rect x="2" y="7" width="2" height="1" fill="#707070"/><rect x="5" y="7" width="1" height="1" fill="#b0b0b0"/><rect x="2" y="8" width="2" height="1" fill="#00ffff"/><rect x="2" y="9" width="2" height="1" fill="#707070"/><rect x="5" y="9" width="1" height="1" fill="#b0b0b0"/><rect x="2" y="10" width="2" height="1" fill="#00ffff"/><rect x="2" y="11" width="2" height="1" fill="#707070"/><rect x="5" y="11" width="1" height="1" fill="#b0b0b0"/><rect x="2" y="12" width="2" height="1" fill="#00ffff"/><rect x="2" y="13" width="2" height="1" fill="#707070"/><rect x="5" y="13" width="1" height="1" fill="#b0b0b0"/></svg>
<span class="t" style="left:88.5px;top:737px;font-size:12px;line-height:14px;transform:scaleX(0.875);transform-origin:0 0;">DQ 16x24VDC/0.5A ST V0.0</span>
<span class="t" style="left:283px;top:737px;font-size:12px;line-height:14px;transform:scaleX(0.875);transform-origin:0 0;">6ES7 132-6BH01-0BA0</span>
<span class="t" style="left:504px;top:737px;font-size:12px;line-height:14px;transform:scaleX(0.875);transform-origin:0 0;">0...1</span>
<span class="t" style="left:764px;top:737px;font-size:12px;line-height:14px;transform:scaleX(0.875);transform-origin:0 0;">Full</span>
<div style="left:11px;top:767px;width:830px;height:1px;background:#000;"></div>
<span class="t" style="left:11.8px;top:753px;font-size:12px;line-height:14px;transform:scaleX(0.875);transform-origin:0 0;">4</span>
<svg style="left:71px;top:752px" width="10" height="17" viewBox="-1 0 10 17"><rect x="0" y="0" width="8" height="16" fill="#000"/><rect x="1" y="1" width="1" height="13" fill="#fff"/><rect x="1" y="1" width="5" height="1" fill="#fff"/><rect x="7" y="0" width="1" height="1" fill="#fff"/><rect x="2" y="2" width="2" height="1" fill="#00ffff"/><rect x="2" y="3" width="2" height="1" fill="#707070"/><rect x="5" y="3" width="1" height="1" fill="#b0b0b0"/><rect x="2" y="4" width="2" height="1" fill="#00ffff"/><rect x="2" y="5" width="2" height="1" fill="#707070"/><rect x="5" y="5" width="1" height="1" fill="#b0b0b0"/><rect x="2" y="6" width="2" height="1" fill="#00ffff"/><rect x="2" y="7" width="2" height="1" fill="#707070"/><rect x="5" y="7" width="1" height="1" fill="#b0b0b0"/><rect x="2" y="8" width="2" height="1" fill="#00ffff"/><rect x="2" y="9" width="2" height="1" fill="#707070"/><rect x="5" y="9" width="1" height="1" fill="#b0b0b0"/><rect x="2" y="10" width="2" height="1" fill="#00ffff"/><rect x="2" y="11" width="2" height="1" fill="#707070"/><rect x="5" y="11" width="1" height="1" fill="#b0b0b0"/><rect x="2" y="12" width="2" height="1" fill="#00ffff"/><rect x="2" y="13" width="2" height="1" fill="#707070"/><rect x="5" y="13" width="1" height="1" fill="#b0b0b0"/></svg>
<span class="t" style="left:88.5px;top:753px;font-size:12px;line-height:14px;transform:scaleX(0.8980);transform-origin:0 0;">AI 4xI 2-/4-wire ST V2.0</span>
<span class="t" style="left:283px;top:753px;font-size:12px;line-height:14px;transform:scaleX(0.875);transform-origin:0 0;">6ES7 134-6GD01-0BA1</span>
<span class="t" style="left:441px;top:753px;font-size:12px;line-height:14px;transform:scaleX(0.875);transform-origin:0 0;">512...519</span>
<span class="t" style="left:764px;top:753px;font-size:12px;line-height:14px;transform:scaleX(0.875);transform-origin:0 0;">Full</span>
<div style="left:11px;top:783px;width:830px;height:1px;background:#000;"></div>
<span class="t" style="left:11.8px;top:769px;font-size:12px;line-height:14px;transform:scaleX(0.875);transform-origin:0 0;">5</span>
<svg style="left:71px;top:768px" width="10" height="17" viewBox="-1 0 10 17"><rect x="0" y="0" width="8" height="16" fill="#000"/><rect x="1" y="1" width="1" height="13" fill="#fff"/><rect x="1" y="1" width="5" height="1" fill="#fff"/><rect x="7" y="0" width="1" height="1" fill="#fff"/><rect x="2" y="2" width="2" height="1" fill="#00ffff"/><rect x="2" y="3" width="2" height="1" fill="#707070"/><rect x="5" y="3" width="1" height="1" fill="#b0b0b0"/><rect x="2" y="4" width="2" height="1" fill="#00ffff"/><rect x="2" y="5" width="2" height="1" fill="#707070"/><rect x="5" y="5" width="1" height="1" fill="#b0b0b0"/><rect x="2" y="6" width="2" height="1" fill="#00ffff"/><rect x="2" y="7" width="2" height="1" fill="#707070"/><rect x="5" y="7" width="1" height="1" fill="#b0b0b0"/><rect x="2" y="8" width="2" height="1" fill="#00ffff"/><rect x="2" y="9" width="2" height="1" fill="#707070"/><rect x="5" y="9" width="1" height="1" fill="#b0b0b0"/><rect x="2" y="10" width="2" height="1" fill="#00ffff"/><rect x="2" y="11" width="2" height="1" fill="#707070"/><rect x="5" y="11" width="1" height="1" fill="#b0b0b0"/><rect x="2" y="12" width="2" height="1" fill="#00ffff"/><rect x="2" y="13" width="2" height="1" fill="#707070"/><rect x="5" y="13" width="1" height="1" fill="#b0b0b0"/></svg>
<span class="t" style="left:88.5px;top:769px;font-size:12px;line-height:14px;transform:scaleX(0.8980);transform-origin:0 0;">AI 4xI 2-/4-wire ST V2.0</span>
<span class="t" style="left:283px;top:769px;font-size:12px;line-height:14px;transform:scaleX(0.875);transform-origin:0 0;">6ES7 134-6GD01-0BA1</span>
<span class="t" style="left:441px;top:769px;font-size:12px;line-height:14px;transform:scaleX(0.875);transform-origin:0 0;">520...527</span>
<span class="t" style="left:764px;top:769px;font-size:12px;line-height:14px;transform:scaleX(0.875);transform-origin:0 0;">Full</span>
<div style="left:7px;top:784px;width:834px;height:16px;background:#0078d7;"></div>
<div style="left:11px;top:784px;width:830px;height:1px;background:repeating-linear-gradient(90deg,#ff8728 0 1px,#0078d7 1px 2px);"></div>
<div style="left:11px;top:784px;width:1px;height:15px;background:repeating-linear-gradient(180deg,#ff8728 0 1px,#0078d7 1px 2px);"></div>
<div style="left:11px;top:799px;width:830px;height:1px;background:#000;"></div>
<div style="left:11px;top:799px;width:830px;height:1px;background:repeating-linear-gradient(90deg,#fff 0 1px,#000 1px 2px);"></div>
<span class="t" style="left:11.8px;top:785px;font-size:12px;line-height:14px;color:#fff;transform:scaleX(0.875);transform-origin:0 0;">6</span>
<svg style="left:71px;top:784px" width="10" height="17" viewBox="-1 0 10 17"><rect x="0" y="0" width="8" height="16" fill="#000"/><rect x="1" y="1" width="1" height="13" fill="#fff"/><rect x="1" y="1" width="5" height="1" fill="#fff"/><rect x="7" y="0" width="1" height="1" fill="#fff"/><rect x="2" y="2" width="2" height="1" fill="#00ffff"/><rect x="2" y="3" width="2" height="1" fill="#707070"/><rect x="5" y="3" width="1" height="1" fill="#b0b0b0"/><rect x="2" y="4" width="2" height="1" fill="#00ffff"/><rect x="2" y="5" width="2" height="1" fill="#707070"/><rect x="5" y="5" width="1" height="1" fill="#b0b0b0"/><rect x="2" y="6" width="2" height="1" fill="#00ffff"/><rect x="2" y="7" width="2" height="1" fill="#707070"/><rect x="5" y="7" width="1" height="1" fill="#b0b0b0"/><rect x="2" y="8" width="2" height="1" fill="#00ffff"/><rect x="2" y="9" width="2" height="1" fill="#707070"/><rect x="5" y="9" width="1" height="1" fill="#b0b0b0"/><rect x="2" y="10" width="2" height="1" fill="#00ffff"/><rect x="2" y="11" width="2" height="1" fill="#707070"/><rect x="5" y="11" width="1" height="1" fill="#b0b0b0"/><rect x="2" y="12" width="2" height="1" fill="#00ffff"/><rect x="2" y="13" width="2" height="1" fill="#707070"/><rect x="5" y="13" width="1" height="1" fill="#b0b0b0"/></svg>
<span class="t" style="left:88.5px;top:785px;font-size:12px;line-height:14px;color:#fff;transform:scaleX(0.8986);transform-origin:0 0;">TM SIWAREX WP351 HF V1.0</span>
<span class="t" style="left:283px;top:785px;font-size:12px;line-height:14px;color:#fff;transform:scaleX(0.875);transform-origin:0 0;">7MH4 138-6BA00-0CU0</span>
<span class="t" style="left:441px;top:785px;font-size:12px;line-height:14px;color:#fff;transform:scaleX(0.875);transform-origin:0 0;">530...561</span>
<span class="t" style="left:504px;top:785px;font-size:12px;line-height:14px;color:#fff;transform:scaleX(0.875);transform-origin:0 0;">530...561</span>
<span class="t" style="left:764px;top:785px;font-size:12px;line-height:14px;color:#fff;transform:scaleX(0.875);transform-origin:0 0;">Full</span>
<div style="left:11px;top:815px;width:830px;height:1px;background:#000;"></div>
<span class="t" style="left:11.8px;top:801px;font-size:12px;line-height:14px;transform:scaleX(0.875);transform-origin:0 0;">7</span>
<svg style="left:71px;top:800px" width="10" height="17" viewBox="-1 0 10 17"><rect x="0" y="0" width="8" height="16" fill="#000"/><rect x="1" y="1" width="1" height="13" fill="#fff"/><rect x="1" y="1" width="5" height="1" fill="#fff"/><rect x="7" y="0" width="1" height="1" fill="#fff"/><rect x="2" y="2" width="2" height="1" fill="#00ffff"/><rect x="2" y="3" width="2" height="1" fill="#707070"/><rect x="5" y="3" width="1" height="1" fill="#b0b0b0"/><rect x="2" y="4" width="2" height="1" fill="#00ffff"/><rect x="2" y="5" width="2" height="1" fill="#707070"/><rect x="5" y="5" width="1" height="1" fill="#b0b0b0"/><rect x="2" y="6" width="2" height="1" fill="#00ffff"/><rect x="2" y="7" width="2" height="1" fill="#707070"/><rect x="5" y="7" width="1" height="1" fill="#b0b0b0"/><rect x="2" y="8" width="2" height="1" fill="#00ffff"/><rect x="2" y="9" width="2" height="1" fill="#707070"/><rect x="5" y="9" width="1" height="1" fill="#b0b0b0"/><rect x="2" y="10" width="2" height="1" fill="#00ffff"/><rect x="2" y="11" width="2" height="1" fill="#707070"/><rect x="5" y="11" width="1" height="1" fill="#b0b0b0"/><rect x="2" y="12" width="2" height="1" fill="#00ffff"/><rect x="2" y="13" width="2" height="1" fill="#707070"/><rect x="5" y="13" width="1" height="1" fill="#b0b0b0"/></svg>
<span class="t" style="left:88.5px;top:801px;font-size:12px;line-height:14px;transform:scaleX(0.8832);transform-origin:0 0;">F-DI 8x24VDC HF2, BP V1~</span>
<span class="t" style="left:283px;top:801px;font-size:12px;line-height:14px;transform:scaleX(0.875);transform-origin:0 0;">6ES7 136-6BA01-0CA0</span>
<span class="t" style="left:441px;top:801px;font-size:12px;line-height:14px;transform:scaleX(0.875);transform-origin:0 0;">4...9</span>
<span class="t" style="left:504px;top:801px;font-size:12px;line-height:14px;transform:scaleX(0.875);transform-origin:0 0;">4...7</span>
<span class="t" style="left:764px;top:801px;font-size:12px;line-height:14px;transform:scaleX(0.875);transform-origin:0 0;">Full</span>
<div style="left:11px;top:831px;width:830px;height:1px;background:#000;"></div>
<span class="t" style="left:11.8px;top:817px;font-size:12px;line-height:14px;transform:scaleX(0.875);transform-origin:0 0;">8</span>
<svg style="left:71px;top:816px" width="10" height="17" viewBox="-1 0 10 17"><rect x="0" y="0" width="8" height="16" fill="#000"/><rect x="1" y="1" width="1" height="13" fill="#fff"/><rect x="1" y="1" width="5" height="1" fill="#fff"/><rect x="7" y="0" width="1" height="1" fill="#fff"/><rect x="2" y="2" width="2" height="1" fill="#00ffff"/><rect x="2" y="3" width="2" height="1" fill="#707070"/><rect x="5" y="3" width="1" height="1" fill="#b0b0b0"/><rect x="2" y="4" width="2" height="1" fill="#00ffff"/><rect x="2" y="5" width="2" height="1" fill="#707070"/><rect x="5" y="5" width="1" height="1" fill="#b0b0b0"/><rect x="2" y="6" width="2" height="1" fill="#00ffff"/><rect x="2" y="7" width="2" height="1" fill="#707070"/><rect x="5" y="7" width="1" height="1" fill="#b0b0b0"/><rect x="2" y="8" width="2" height="1" fill="#00ffff"/><rect x="2" y="9" width="2" height="1" fill="#707070"/><rect x="5" y="9" width="1" height="1" fill="#b0b0b0"/><rect x="2" y="10" width="2" height="1" fill="#00ffff"/><rect x="2" y="11" width="2" height="1" fill="#707070"/><rect x="5" y="11" width="1" height="1" fill="#b0b0b0"/><rect x="2" y="12" width="2" height="1" fill="#00ffff"/><rect x="2" y="13" width="2" height="1" fill="#707070"/><rect x="5" y="13" width="1" height="1" fill="#b0b0b0"/></svg>
<span class="t" style="left:88.5px;top:817px;font-size:12px;line-height:14px;transform:scaleX(0.8798);transform-origin:0 0;">Server module V1.1 (0 b~</span>
<span class="t" style="left:283px;top:817px;font-size:12px;line-height:14px;transform:scaleX(0.875);transform-origin:0 0;">6ES7 193-6PA00-0AA0</span>
<span class="t" style="left:574px;top:817px;font-size:12px;line-height:14px;transform:scaleX(0.875);transform-origin:0 0;">16354*</span>
<span class="t" style="left:764px;top:817px;font-size:12px;line-height:14px;transform:scaleX(0.875);transform-origin:0 0;">Full</span>
<div style="left:11px;top:847px;width:830px;height:1px;background:#000;"></div>
<span class="t" style="left:11.8px;top:833px;font-size:12px;line-height:14px;transform:scaleX(0.875);transform-origin:0 0;">9</span>
<div style="left:11px;top:863px;width:830px;height:1px;background:#000;"></div>
<span class="t" style="left:11.8px;top:849px;font-size:12px;line-height:14px;transform:scaleX(0.875);transform-origin:0 0;">10</span>
<div style="left:66px;top:640px;width:1px;height:221px;background:#000;"></div>
<div style="left:280px;top:640px;width:1px;height:221px;background:#000;"></div>
<div style="left:439px;top:640px;width:1px;height:221px;background:#000;"></div>
<div style="left:502px;top:640px;width:1px;height:221px;background:#000;"></div>
<div style="left:571px;top:640px;width:1px;height:221px;background:#000;"></div>
<div style="left:699px;top:640px;width:1px;height:221px;background:#000;"></div>
<div style="left:762px;top:640px;width:1px;height:221px;background:#000;"></div>
<div style="left:143px;top:43px;width:321px;height:414px;background:#f2f2f2;border:1px solid #cccccc;"></div>
<div style="left:144px;top:44px;width:30px;height:412px;background:#f0f0f0;"></div>
<span class="t" style="left:178.1px;top:50px;font-size:12px;line-height:14px;color:#6d6d6d;letter-spacing:-0.058px;">Download...</span>
<span class="t" style="left:410.8px;top:50px;font-size:12px;line-height:14px;color:#6d6d6d;letter-spacing:-0.029px;">Ctrl+L</span>
<span class="t" style="left:178.1px;top:72px;font-size:12px;line-height:14px;color:#000;letter-spacing:-0.166px;">Upload...</span>
<div style="left:174px;top:93px;width:287px;height:1px;background:#d7d7d7;"></div>
<span class="t" style="left:178.1px;top:101px;font-size:12px;line-height:14px;color:#6d6d6d;letter-spacing:0.091px;">Download Module Identification...</span>
<span class="t" style="left:178.1px;top:123px;font-size:12px;line-height:14px;color:#6d6d6d;letter-spacing:0.01px;">Upload Module Identification to PG...</span>
<div style="left:174px;top:144px;width:287px;height:1px;background:#d7d7d7;"></div>
<span class="t" style="left:178.1px;top:152px;font-size:12px;line-height:14px;color:#000;letter-spacing:-0.092px;">Faulty Modules...</span>
<div style="left:174px;top:173px;width:287px;height:1px;background:#d7d7d7;"></div>
<span class="t" style="left:178.1px;top:181px;font-size:12px;line-height:14px;color:#000;letter-spacing:0.153px;">Module Information...</span>
<span class="t" style="left:408.4px;top:181px;font-size:12px;line-height:14px;color:#000;letter-spacing:0.051px;">Ctrl+D</span>
<span class="t" style="left:178.1px;top:203px;font-size:12px;line-height:14px;color:#6d6d6d;letter-spacing:-0.016px;">Operating Mode...</span>
<span class="t" style="left:413.5px;top:203px;font-size:12px;line-height:14px;color:#6d6d6d;letter-spacing:0.097px;">Ctrl+I</span>
<span class="t" style="left:178.1px;top:225px;font-size:12px;line-height:14px;color:#6d6d6d;letter-spacing:-0.358px;">Clear/Reset...</span>
<span class="t" style="left:178.1px;top:247px;font-size:12px;line-height:14px;color:#6d6d6d;letter-spacing:-0.158px;">Set Time of Day...</span>
<span class="t" style="left:178.1px;top:269px;font-size:12px;line-height:14px;color:#000;letter-spacing:0.554px;">Monitor/Modify</span>
<div style="left:174px;top:290px;width:287px;height:1px;background:#d7d7d7;"></div>
<span class="t" style="left:178.1px;top:298px;font-size:12px;line-height:14px;color:#6d6d6d;letter-spacing:-0.184px;">Update Firmware...</span>
<div style="left:174px;top:319px;width:287px;height:1px;background:#d7d7d7;"></div>
<span class="t" style="left:178.1px;top:327px;font-size:12px;line-height:14px;color:#6d6d6d;letter-spacing:-0.19px;">Save Device Name to Memory Card...</span>
<div style="left:174px;top:348px;width:287px;height:1px;background:#d7d7d7;"></div>
<span class="t" style="left:178.1px;top:356px;font-size:12px;line-height:14px;color:#000;letter-spacing:-0.254px;">Ethernet</span>
<svg style="left:445px;top:358px;shape-rendering:geometricPrecision" width="9" height="10" viewBox="0 0 9 10"><path d="M2 0.8 L6.2 5 L2 9.2" fill="none" stroke="#202020" stroke-width="1.1"/></svg>
<div style="left:174px;top:377px;width:287px;height:1px;background:#d7d7d7;"></div>
<span class="t" style="left:178.1px;top:385px;font-size:12px;line-height:14px;color:#000;letter-spacing:-1.192px;">PROFIBUS</span>
<svg style="left:445px;top:387px;shape-rendering:geometricPrecision" width="9" height="10" viewBox="0 0 9 10"><path d="M2 0.8 L6.2 5 L2 9.2" fill="none" stroke="#202020" stroke-width="1.1"/></svg>
<div style="left:174px;top:406px;width:287px;height:1px;background:#d7d7d7;"></div>
<span class="t" style="left:178.1px;top:414px;font-size:12px;line-height:14px;color:#6d6d6d;letter-spacing:-0.51px;">Save Service Data...</span>
<span class="t" style="left:178.1px;top:436px;font-size:12px;line-height:14px;color:#6d6d6d;letter-spacing:-0.412px;">Save Security Events...</span>
</div></body></html>
